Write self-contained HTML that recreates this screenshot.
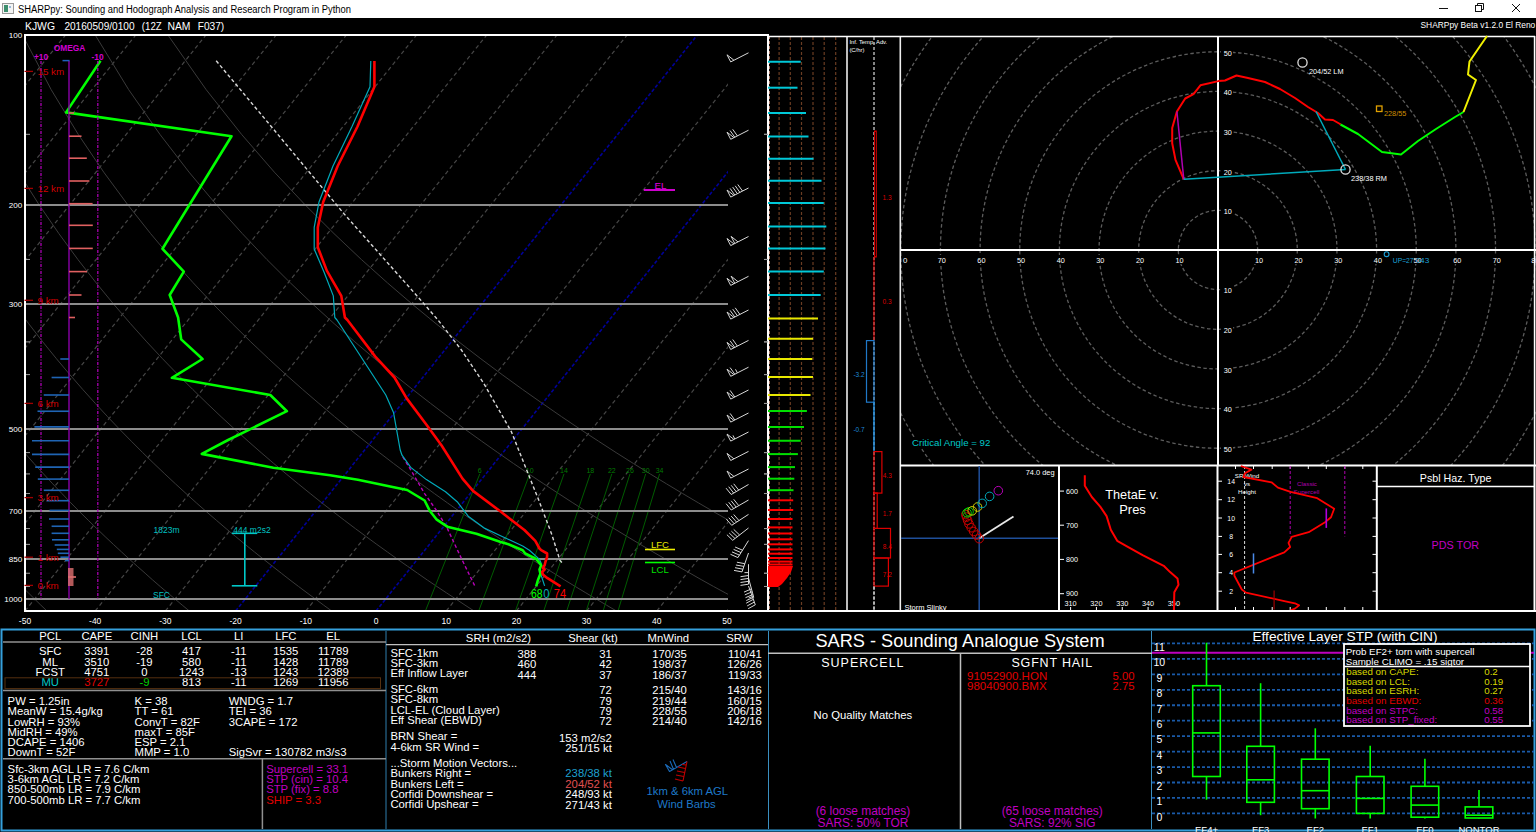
<!DOCTYPE html>
<html><head><meta charset="utf-8"><style>
html,body{margin:0;padding:0;background:#000;overflow:hidden;width:1536px;height:832px}
svg{display:block}
text{font-family:"Liberation Sans", sans-serif;}
</style></head><body>
<svg width="1536" height="832" viewBox="0 0 1536 832">
<rect x="0" y="0" width="1536" height="832" fill="#000"/>
<rect x="0.00" y="0.00" width="1536.00" height="18.00" fill="#ffffff" stroke="none" stroke-width="1" />
<rect x="2.50" y="3.50" width="11.00" height="10.00" fill="#f4f4f4" stroke="#9a9a9a" stroke-width="1" />
<rect x="4.00" y="5.00" width="4.00" height="7.00" fill="#3d8f6e" stroke="none" stroke-width="1" />
<rect x="9.50" y="6.00" width="1.00" height="2.00" fill="#3a7fc0" stroke="none" stroke-width="1" />
<text x="18.0" y="13.0" font-size="10" fill="#000" text-anchor="start" textLength="333.0" lengthAdjust="spacingAndGlyphs" >SHARPpy: Sounding and Hodograph Analysis and Research Program in Python</text>
<line x1="1439.00" y1="8.50" x2="1448.00" y2="8.50" stroke="#111" stroke-width="1" />
<rect x="1475.50" y="5.50" width="6.00" height="6.00" fill="#fff" stroke="#111" stroke-width="1" />
<polyline points="1477.5,5.5 1477.5,3.5 1483.5,3.5 1483.5,9.5 1481.5,9.5" fill="none" stroke="#111" stroke-width="1" stroke-linejoin="round" />
<line x1="1512.00" y1="4.00" x2="1520.00" y2="12.00" stroke="#111" stroke-width="1" />
<line x1="1520.00" y1="4.00" x2="1512.00" y2="12.00" stroke="#111" stroke-width="1" />
<text x="25.0" y="29.5" font-size="10.8" fill="#fff" text-anchor="start" textLength="30.0" lengthAdjust="spacingAndGlyphs" >KJWG</text>
<text x="64.4" y="29.5" font-size="10.8" fill="#fff" text-anchor="start" textLength="70.2" lengthAdjust="spacingAndGlyphs" >20160509/0100</text>
<text x="141.8" y="29.5" font-size="10.8" fill="#fff" text-anchor="start" textLength="20.0" lengthAdjust="spacingAndGlyphs" >(12Z</text>
<text x="167.5" y="29.5" font-size="10.8" fill="#fff" text-anchor="start" textLength="23.0" lengthAdjust="spacingAndGlyphs" >NAM</text>
<text x="197.7" y="29.5" font-size="10.8" fill="#fff" text-anchor="start" textLength="26.5" lengthAdjust="spacingAndGlyphs" >F037)</text>
<text x="1420.5" y="28.0" font-size="9" fill="#fff" text-anchor="start" textLength="114.8" lengthAdjust="spacingAndGlyphs" >SHARPpy Beta v1.2.0 El Reno</text>
<defs><clipPath id="skc"><rect x="25" y="35" width="703" height="576"/></clipPath></defs>
<g clip-path="url(#skc)">
<line x1="-747.20" y1="611.00" x2="-285.49" y2="35.00" stroke="#464646" stroke-width="1.2" stroke-dasharray="4,3"/>
<line x1="-677.00" y1="611.00" x2="-215.29" y2="35.00" stroke="#464646" stroke-width="1.2" stroke-dasharray="4,3"/>
<line x1="-606.80" y1="611.00" x2="-145.09" y2="35.00" stroke="#464646" stroke-width="1.2" stroke-dasharray="4,3"/>
<line x1="-536.60" y1="611.00" x2="-74.89" y2="35.00" stroke="#464646" stroke-width="1.2" stroke-dasharray="4,3"/>
<line x1="-466.40" y1="611.00" x2="-4.69" y2="35.00" stroke="#464646" stroke-width="1.2" stroke-dasharray="4,3"/>
<line x1="-396.20" y1="611.00" x2="65.51" y2="35.00" stroke="#464646" stroke-width="1.2" stroke-dasharray="4,3"/>
<line x1="-326.00" y1="611.00" x2="135.71" y2="35.00" stroke="#464646" stroke-width="1.2" stroke-dasharray="4,3"/>
<line x1="-255.80" y1="611.00" x2="205.91" y2="35.00" stroke="#464646" stroke-width="1.2" stroke-dasharray="4,3"/>
<line x1="-185.60" y1="611.00" x2="276.11" y2="35.00" stroke="#464646" stroke-width="1.2" stroke-dasharray="4,3"/>
<line x1="-115.40" y1="611.00" x2="346.31" y2="35.00" stroke="#464646" stroke-width="1.2" stroke-dasharray="4,3"/>
<line x1="-45.20" y1="611.00" x2="416.51" y2="35.00" stroke="#464646" stroke-width="1.2" stroke-dasharray="4,3"/>
<line x1="25.00" y1="611.00" x2="486.71" y2="35.00" stroke="#464646" stroke-width="1.2" stroke-dasharray="4,3"/>
<line x1="95.20" y1="611.00" x2="556.91" y2="35.00" stroke="#464646" stroke-width="1.2" stroke-dasharray="4,3"/>
<line x1="165.40" y1="611.00" x2="627.11" y2="35.00" stroke="#464646" stroke-width="1.2" stroke-dasharray="4,3"/>
<line x1="235.60" y1="611.00" x2="697.31" y2="35.00" stroke="#000098" stroke-width="1.6" stroke-dasharray="3.5,2"/>
<line x1="305.80" y1="611.00" x2="767.51" y2="35.00" stroke="#464646" stroke-width="1.2" stroke-dasharray="4,3"/>
<line x1="376.00" y1="611.00" x2="837.71" y2="35.00" stroke="#000098" stroke-width="1.6" stroke-dasharray="3.5,2"/>
<line x1="446.20" y1="611.00" x2="907.91" y2="35.00" stroke="#464646" stroke-width="1.2" stroke-dasharray="4,3"/>
<line x1="516.40" y1="611.00" x2="978.11" y2="35.00" stroke="#464646" stroke-width="1.2" stroke-dasharray="4,3"/>
<line x1="586.60" y1="611.00" x2="1048.31" y2="35.00" stroke="#464646" stroke-width="1.2" stroke-dasharray="4,3"/>
<line x1="656.80" y1="611.00" x2="1118.51" y2="35.00" stroke="#464646" stroke-width="1.2" stroke-dasharray="4,3"/>
<line x1="727.00" y1="611.00" x2="1188.71" y2="35.00" stroke="#464646" stroke-width="1.2" stroke-dasharray="4,3"/>
<polyline points="47.0,611.0 40.8,605.1 34.6,599.0 28.3,592.8 21.9,586.5 15.4,580.0 8.8,573.2 2.2,566.3 -4.6,559.2 -11.4,551.9 -18.4,544.4 -25.4,536.6 -32.5,528.6 -39.8,520.3 -47.2,511.7 -54.6,502.8 -62.2,493.5 -70.0,483.9 -77.8,473.9 -85.8,463.5 -94.0,452.6 -102.3,441.2 -110.8,429.3 -119.4,416.7 -128.2,403.4 -137.2,389.4 -146.3,374.6 -155.7,358.8 -165.2,341.9 -175.0,323.7 -185.0,304.1 -195.1,282.8 -205.5,259.5 -216.1,233.6 -226.8,204.8 -237.6,172.1 -248.4,134.3 -258.8,89.7 -268.4,35.0" fill="none" stroke="#3a3a3a" stroke-width="1" stroke-linejoin="round" />
<polyline points="189.4,611.0 182.2,605.1 175.0,599.0 167.6,592.8 160.2,586.5 152.7,580.0 145.1,573.2 137.3,566.3 129.4,559.2 121.5,551.9 113.4,544.4 105.1,536.6 96.8,528.6 88.3,520.3 79.6,511.7 70.8,502.8 61.9,493.5 52.8,483.9 43.5,473.9 34.0,463.5 24.4,452.6 14.5,441.2 4.4,429.3 -5.9,416.7 -16.4,403.4 -27.2,389.4 -38.3,374.6 -49.6,358.8 -61.2,341.9 -73.2,323.7 -85.4,304.1 -98.1,282.8 -111.0,259.5 -124.4,233.6 -138.2,204.8 -152.3,172.1 -166.7,134.3 -181.3,89.7 -195.7,35.0" fill="none" stroke="#3a3a3a" stroke-width="1" stroke-linejoin="round" />
<polyline points="331.7,611.0 323.6,605.1 315.4,599.0 307.0,592.8 298.6,586.5 290.0,580.0 281.3,573.2 272.5,566.3 263.5,559.2 254.4,551.9 245.1,544.4 235.7,536.6 226.1,528.6 216.4,520.3 206.4,511.7 196.3,502.8 186.0,493.5 175.5,483.9 164.8,473.9 153.9,463.5 142.7,452.6 131.3,441.2 119.6,429.3 107.6,416.7 95.3,403.4 82.7,389.4 69.8,374.6 56.5,358.8 42.8,341.9 28.7,323.7 14.1,304.1 -1.0,282.8 -16.6,259.5 -32.7,233.6 -49.5,204.8 -67.0,172.1 -85.1,134.3 -103.8,89.7 -123.0,35.0" fill="none" stroke="#3a3a3a" stroke-width="1" stroke-linejoin="round" />
<polyline points="474.1,611.0 465.0,605.1 455.8,599.0 446.4,592.8 436.9,586.5 427.3,580.0 417.5,573.2 407.6,566.3 397.5,559.2 387.3,551.9 376.8,544.4 366.2,536.6 355.4,528.6 344.4,520.3 333.2,511.7 321.8,502.8 310.2,493.5 298.3,483.9 286.2,473.9 273.8,463.5 261.1,452.6 248.1,441.2 234.8,429.3 221.1,416.7 207.1,403.4 192.7,389.4 177.9,374.6 162.6,358.8 146.8,341.9 130.5,323.7 113.6,304.1 96.1,282.8 77.9,259.5 58.9,233.6 39.1,204.8 18.4,172.1 -3.4,134.3 -26.3,89.7 -50.3,35.0" fill="none" stroke="#3a3a3a" stroke-width="1" stroke-linejoin="round" />
<polyline points="616.5,611.0 606.4,605.1 596.2,599.0 585.8,592.8 575.3,586.5 564.6,580.0 553.8,573.2 542.7,566.3 531.5,559.2 520.1,551.9 508.6,544.4 496.8,536.6 484.7,528.6 472.5,520.3 460.0,511.7 447.3,502.8 434.3,493.5 421.1,483.9 407.5,473.9 393.6,463.5 379.4,452.6 364.9,441.2 349.9,429.3 334.6,416.7 318.9,403.4 302.6,389.4 285.9,374.6 268.7,358.8 250.8,341.9 232.4,323.7 213.2,304.1 193.2,282.8 172.4,259.5 150.6,233.6 127.8,204.8 103.7,172.1 78.2,134.3 51.2,89.7 22.5,35.0" fill="none" stroke="#3a3a3a" stroke-width="1" stroke-linejoin="round" />
<polyline points="758.8,611.0 747.8,605.1 736.6,599.0 725.2,592.8 713.6,586.5 701.9,580.0 690.0,573.2 677.9,566.3 665.6,559.2 653.0,551.9 640.3,544.4 627.3,536.6 614.1,528.6 600.6,520.3 586.8,511.7 572.8,502.8 558.5,493.5 543.8,483.9 528.8,473.9 513.5,463.5 497.8,452.6 481.7,441.2 465.1,429.3 448.1,416.7 430.6,403.4 412.6,389.4 394.0,374.6 374.8,358.8 354.9,341.9 334.2,323.7 312.7,304.1 290.3,282.8 266.9,259.5 242.3,233.6 216.4,204.8 189.0,172.1 159.9,134.3 128.7,89.7 95.2,35.0" fill="none" stroke="#3a3a3a" stroke-width="1" stroke-linejoin="round" />
<polyline points="901.2,611.0 889.2,605.1 877.0,599.0 864.6,592.8 852.0,586.5 839.2,580.0 826.2,573.2 813.0,566.3 799.6,559.2 785.9,551.9 772.0,544.4 757.8,536.6 743.4,528.6 728.7,520.3 713.6,511.7 698.3,502.8 682.6,493.5 666.6,483.9 650.2,473.9 633.4,463.5 616.1,452.6 598.5,441.2 580.3,429.3 561.6,416.7 542.4,403.4 522.5,389.4 502.1,374.6 480.9,358.8 458.9,341.9 436.0,323.7 412.2,304.1 387.4,282.8 361.4,259.5 334.0,233.6 305.1,204.8 274.3,172.1 241.5,134.3 206.2,89.7 167.9,35.0" fill="none" stroke="#3a3a3a" stroke-width="1" stroke-linejoin="round" />
<polyline points="425.4,611.0 479.8,473.9" fill="none" stroke="#005c00" stroke-width="1" stroke-linejoin="round" />
<text x="479.8" y="472.9" font-size="7" fill="#007a00" text-anchor="middle" >6</text>
<polyline points="478.7,611.0 529.7,473.9" fill="none" stroke="#005c00" stroke-width="1" stroke-linejoin="round" />
<text x="529.7" y="472.9" font-size="7" fill="#007a00" text-anchor="middle" >10</text>
<polyline points="515.4,611.0 564.0,473.9" fill="none" stroke="#005c00" stroke-width="1" stroke-linejoin="round" />
<text x="564.0" y="472.9" font-size="7" fill="#007a00" text-anchor="middle" >14</text>
<polyline points="543.7,611.0 590.3,473.9" fill="none" stroke="#005c00" stroke-width="1" stroke-linejoin="round" />
<text x="590.3" y="472.9" font-size="7" fill="#007a00" text-anchor="middle" >18</text>
<polyline points="566.7,611.0 611.8,473.9" fill="none" stroke="#005c00" stroke-width="1" stroke-linejoin="round" />
<text x="611.8" y="472.9" font-size="7" fill="#007a00" text-anchor="middle" >22</text>
<polyline points="586.2,611.0 630.0,473.9" fill="none" stroke="#005c00" stroke-width="1" stroke-linejoin="round" />
<text x="630.0" y="472.9" font-size="7" fill="#007a00" text-anchor="middle" >26</text>
<polyline points="603.1,611.0 645.7,473.9" fill="none" stroke="#005c00" stroke-width="1" stroke-linejoin="round" />
<text x="645.7" y="472.9" font-size="7" fill="#007a00" text-anchor="middle" >30</text>
<polyline points="618.0,611.0 659.6,473.9" fill="none" stroke="#005c00" stroke-width="1" stroke-linejoin="round" />
<text x="659.6" y="472.9" font-size="7" fill="#007a00" text-anchor="middle" >34</text>
</g>
<line x1="25.00" y1="599.00" x2="728.00" y2="599.00" stroke="#8c8c8c" stroke-width="2" />
<text x="22.3" y="602.0" font-size="8.1" fill="#fff" text-anchor="end" >1000</text>
<line x1="25.00" y1="559.00" x2="728.00" y2="559.00" stroke="#8c8c8c" stroke-width="2" />
<text x="22.3" y="562.0" font-size="8.1" fill="#fff" text-anchor="end" >850</text>
<line x1="25.00" y1="511.00" x2="728.00" y2="511.00" stroke="#8c8c8c" stroke-width="2" />
<text x="22.3" y="514.0" font-size="8.1" fill="#fff" text-anchor="end" >700</text>
<line x1="25.00" y1="429.00" x2="728.00" y2="429.00" stroke="#8c8c8c" stroke-width="2" />
<text x="22.3" y="432.0" font-size="8.1" fill="#fff" text-anchor="end" >500</text>
<line x1="25.00" y1="304.00" x2="728.00" y2="304.00" stroke="#8c8c8c" stroke-width="2" />
<text x="22.3" y="307.0" font-size="8.1" fill="#fff" text-anchor="end" >300</text>
<line x1="25.00" y1="205.00" x2="728.00" y2="205.00" stroke="#8c8c8c" stroke-width="2" />
<text x="22.3" y="208.0" font-size="8.1" fill="#fff" text-anchor="end" >200</text>
<text x="22.3" y="38.0" font-size="8.1" fill="#fff" text-anchor="end" >100</text>
<line x1="24.00" y1="134.32" x2="30.00" y2="134.32" stroke="#9a9a9a" stroke-width="1" />
<line x1="764.00" y1="134.32" x2="768.00" y2="134.32" stroke="#9a9a9a" stroke-width="1" />
<line x1="24.00" y1="259.46" x2="30.00" y2="259.46" stroke="#9a9a9a" stroke-width="1" />
<line x1="764.00" y1="259.46" x2="768.00" y2="259.46" stroke="#9a9a9a" stroke-width="1" />
<line x1="24.00" y1="341.88" x2="30.00" y2="341.88" stroke="#9a9a9a" stroke-width="1" />
<line x1="764.00" y1="341.88" x2="768.00" y2="341.88" stroke="#9a9a9a" stroke-width="1" />
<line x1="24.00" y1="374.59" x2="30.00" y2="374.59" stroke="#9a9a9a" stroke-width="1" />
<line x1="764.00" y1="374.59" x2="768.00" y2="374.59" stroke="#9a9a9a" stroke-width="1" />
<line x1="24.00" y1="403.44" x2="30.00" y2="403.44" stroke="#9a9a9a" stroke-width="1" />
<line x1="764.00" y1="403.44" x2="768.00" y2="403.44" stroke="#9a9a9a" stroke-width="1" />
<line x1="24.00" y1="452.60" x2="30.00" y2="452.60" stroke="#9a9a9a" stroke-width="1" />
<line x1="764.00" y1="452.60" x2="768.00" y2="452.60" stroke="#9a9a9a" stroke-width="1" />
<line x1="24.00" y1="473.91" x2="30.00" y2="473.91" stroke="#9a9a9a" stroke-width="1" />
<line x1="764.00" y1="473.91" x2="768.00" y2="473.91" stroke="#9a9a9a" stroke-width="1" />
<line x1="24.00" y1="493.52" x2="30.00" y2="493.52" stroke="#9a9a9a" stroke-width="1" />
<line x1="764.00" y1="493.52" x2="768.00" y2="493.52" stroke="#9a9a9a" stroke-width="1" />
<line x1="24.00" y1="528.58" x2="30.00" y2="528.58" stroke="#9a9a9a" stroke-width="1" />
<line x1="764.00" y1="528.58" x2="768.00" y2="528.58" stroke="#9a9a9a" stroke-width="1" />
<line x1="24.00" y1="544.39" x2="30.00" y2="544.39" stroke="#9a9a9a" stroke-width="1" />
<line x1="764.00" y1="544.39" x2="768.00" y2="544.39" stroke="#9a9a9a" stroke-width="1" />
<line x1="24.00" y1="573.24" x2="30.00" y2="573.24" stroke="#9a9a9a" stroke-width="1" />
<line x1="764.00" y1="573.24" x2="768.00" y2="573.24" stroke="#9a9a9a" stroke-width="1" />
<line x1="24.00" y1="586.48" x2="30.00" y2="586.48" stroke="#9a9a9a" stroke-width="1" />
<line x1="764.00" y1="586.48" x2="768.00" y2="586.48" stroke="#9a9a9a" stroke-width="1" />
<rect x="25.00" y="35.00" width="743.00" height="576.00" fill="none" stroke="#fff" stroke-width="2" />
<text x="25.0" y="624.0" font-size="8.5" fill="#fff" text-anchor="middle" >-50</text>
<text x="95.2" y="624.0" font-size="8.5" fill="#fff" text-anchor="middle" >-40</text>
<text x="165.4" y="624.0" font-size="8.5" fill="#fff" text-anchor="middle" >-30</text>
<text x="235.6" y="624.0" font-size="8.5" fill="#fff" text-anchor="middle" >-20</text>
<text x="305.8" y="624.0" font-size="8.5" fill="#fff" text-anchor="middle" >-10</text>
<text x="376.0" y="624.0" font-size="8.5" fill="#fff" text-anchor="middle" >0</text>
<text x="446.2" y="624.0" font-size="8.5" fill="#fff" text-anchor="middle" >10</text>
<text x="516.4" y="624.0" font-size="8.5" fill="#fff" text-anchor="middle" >20</text>
<text x="586.6" y="624.0" font-size="8.5" fill="#fff" text-anchor="middle" >30</text>
<text x="656.8" y="624.0" font-size="8.5" fill="#fff" text-anchor="middle" >40</text>
<text x="727.0" y="624.0" font-size="8.5" fill="#fff" text-anchor="middle" >50</text>
<g clip-path="url(#skc)">
<polyline points="216.2,60.8 272.1,127.5 344.2,214.0 416.4,295.2 438.0,320.0 461.4,350.0 483.4,382.8 511.3,431.6 539.2,501.3 552.0,535.0 560.0,560.6 563.6,564.0" fill="none" stroke="#d8d8d8" stroke-width="1.4" stroke-linejoin="round" stroke-dasharray="3.5,2.5"/>
<polyline points="402.8,457.0 412.4,472.7 424.6,493.6 436.9,511.0 447.3,528.4 461.2,558.0 475.3,587.0" fill="none" stroke="#b800b8" stroke-width="1.4" stroke-linejoin="round" stroke-dasharray="3.5,2.5"/>
<polyline points="370.8,60.9 370.0,86.8 352.0,126.5 333.0,166.0 319.0,202.0 314.2,227.4 314.2,249.0 324.0,272.0 333.3,295.9 334.8,317.5 337.0,320.0 385.8,395.0 393.5,412.4 400.2,450.0 402.0,455.2 410.7,467.4 426.4,479.6 445.5,491.8 457.7,502.3 468.2,516.2 484.9,528.4 500.0,535.5 522.7,546.0 529.4,550.2 539.5,559.4 541.2,563.6 540.4,568.7 541.2,575.4 544.6,585.9" fill="none" stroke="#00aabb" stroke-width="1.2" stroke-linejoin="round" />
<polyline points="100.5,60.8 66.1,112.4 231.5,136.2 162.5,248.8 183.8,271.6 169.7,295.0 178.1,317.5 181.2,339.4 202.5,359.0 171.9,377.8 270.3,395.0 286.9,411.2 228.1,440.0 201.8,453.9 273.4,467.7 330.0,475.2 357.9,479.7 395.0,487.5 407.2,490.0 424.6,500.5 429.9,511.0 436.8,519.7 447.3,526.7 457.7,529.3 476.4,533.8 500.0,541.8 508.4,544.3 522.7,550.2 525.2,553.5 536.2,559.0 541.2,565.3 539.5,569.5 540.4,573.7 537.8,580.5 536.2,586.3" fill="none" stroke="#00ff00" stroke-width="2.6" stroke-linejoin="round" />
<polyline points="374.4,60.9 374.4,86.8 357.5,126.5 337.7,166.0 323.2,202.0 317.8,227.4 317.8,247.2 326.8,270.6 341.3,295.9 344.9,317.5 347.4,320.0 375.3,356.6 394.5,377.5 406.7,398.4 427.6,426.3 441.6,445.5 462.5,478.6 473.0,490.9 500.9,511.8 524.4,530.0 535.3,540.9 539.5,548.5 541.2,550.2 547.1,553.5 547.1,556.9 545.4,562.0 544.6,565.3 542.9,567.8 544.6,569.5 542.1,572.0 542.9,574.6 547.1,577.9 560.6,586.3" fill="none" stroke="#ff0000" stroke-width="2.6" stroke-linejoin="round" />
</g>
<text x="531.0" y="597.5" font-size="12" fill="#00ff00" text-anchor="start" textLength="11.6" lengthAdjust="spacingAndGlyphs" >68</text>
<text x="543.3" y="597.5" font-size="12" fill="#00aabb" text-anchor="start" textLength="6.3" lengthAdjust="spacingAndGlyphs" >0</text>
<text x="553.8" y="597.5" font-size="12" fill="#ff0000" text-anchor="start" textLength="12.2" lengthAdjust="spacingAndGlyphs" >74</text>
<text x="69.5" y="51.0" font-size="8.4" fill="#d000d0" text-anchor="middle" font-weight="bold">OMEGA</text>
<text x="41.0" y="59.5" font-size="8.4" fill="#d000d0" text-anchor="middle" font-weight="bold">+10</text>
<text x="97.5" y="59.5" font-size="8.4" fill="#d000d0" text-anchor="middle" font-weight="bold">-10</text>
<line x1="41.00" y1="61.00" x2="41.00" y2="599.00" stroke="#a800b0" stroke-width="1.3" stroke-dasharray="3,1.5,1,1.5"/>
<line x1="97.80" y1="61.00" x2="97.80" y2="599.00" stroke="#a800b0" stroke-width="1.3" stroke-dasharray="3,1.5,1,1.5"/>
<line x1="69.00" y1="61.00" x2="69.00" y2="599.00" stroke="#8a00a8" stroke-width="1.4" />
<line x1="62.50" y1="60.60" x2="69.60" y2="60.60" stroke="#1f5fbf" stroke-width="1.5" />
<line x1="69.00" y1="113.00" x2="74.00" y2="113.00" stroke="#e06060" stroke-width="1.6" />
<line x1="69.00" y1="136.20" x2="81.50" y2="136.20" stroke="#e06060" stroke-width="1.6" />
<line x1="69.00" y1="158.20" x2="86.80" y2="158.20" stroke="#e06060" stroke-width="1.6" />
<line x1="69.00" y1="181.00" x2="89.40" y2="181.00" stroke="#e06060" stroke-width="1.6" />
<line x1="69.00" y1="203.70" x2="92.60" y2="203.70" stroke="#e06060" stroke-width="1.6" />
<line x1="69.00" y1="225.30" x2="92.80" y2="225.30" stroke="#e06060" stroke-width="1.6" />
<line x1="69.00" y1="248.40" x2="92.80" y2="248.40" stroke="#e06060" stroke-width="1.6" />
<line x1="69.00" y1="271.60" x2="87.00" y2="271.60" stroke="#e06060" stroke-width="1.6" />
<line x1="69.00" y1="295.00" x2="81.50" y2="295.00" stroke="#e06060" stroke-width="1.6" />
<line x1="69.00" y1="317.50" x2="75.00" y2="317.50" stroke="#e06060" stroke-width="1.6" />
<line x1="60.30" y1="359.00" x2="69.00" y2="359.00" stroke="#1f64b4" stroke-width="1.6" />
<line x1="51.60" y1="377.50" x2="69.00" y2="377.50" stroke="#1f64b4" stroke-width="1.6" />
<line x1="43.75" y1="395.00" x2="69.00" y2="395.00" stroke="#1f64b4" stroke-width="1.6" />
<line x1="37.50" y1="411.25" x2="69.00" y2="411.25" stroke="#1f64b4" stroke-width="1.6" />
<line x1="34.40" y1="426.90" x2="69.00" y2="426.90" stroke="#1f64b4" stroke-width="1.6" />
<line x1="32.00" y1="440.80" x2="69.00" y2="440.80" stroke="#1f64b4" stroke-width="1.6" />
<line x1="32.00" y1="454.40" x2="69.00" y2="454.40" stroke="#1f64b4" stroke-width="1.6" />
<line x1="35.20" y1="467.10" x2="69.00" y2="467.10" stroke="#1f64b4" stroke-width="1.6" />
<line x1="37.80" y1="479.10" x2="69.00" y2="479.10" stroke="#1f64b4" stroke-width="1.6" />
<line x1="43.75" y1="490.30" x2="69.00" y2="490.30" stroke="#1f64b4" stroke-width="1.6" />
<line x1="46.40" y1="500.70" x2="69.00" y2="500.70" stroke="#1f64b4" stroke-width="1.6" />
<line x1="49.50" y1="510.40" x2="69.00" y2="510.40" stroke="#1f64b4" stroke-width="1.6" />
<line x1="49.00" y1="519.00" x2="69.00" y2="519.00" stroke="#1f64b4" stroke-width="1.6" />
<line x1="51.60" y1="526.25" x2="69.00" y2="526.25" stroke="#1f64b4" stroke-width="1.6" />
<line x1="51.60" y1="533.30" x2="69.00" y2="533.30" stroke="#1f64b4" stroke-width="1.6" />
<line x1="52.00" y1="539.80" x2="69.00" y2="539.80" stroke="#1f64b4" stroke-width="1.6" />
<line x1="54.70" y1="545.00" x2="69.00" y2="545.00" stroke="#1f64b4" stroke-width="1.6" />
<line x1="56.80" y1="549.40" x2="69.00" y2="549.40" stroke="#1f64b4" stroke-width="1.6" />
<line x1="57.80" y1="553.30" x2="69.00" y2="553.30" stroke="#1f64b4" stroke-width="1.6" />
<line x1="60.40" y1="557.20" x2="69.00" y2="557.20" stroke="#1f64b4" stroke-width="1.6" />
<line x1="65.00" y1="560.60" x2="69.00" y2="560.60" stroke="#1f64b4" stroke-width="1.6" />
<line x1="68.00" y1="569.00" x2="73.50" y2="569.00" stroke="#e07070" stroke-width="1.6" />
<line x1="68.00" y1="571.00" x2="73.50" y2="571.00" stroke="#e07070" stroke-width="1.6" />
<line x1="68.00" y1="573.00" x2="73.50" y2="573.00" stroke="#e07070" stroke-width="1.6" />
<line x1="68.00" y1="575.00" x2="73.50" y2="575.00" stroke="#e07070" stroke-width="1.6" />
<line x1="68.00" y1="577.00" x2="73.50" y2="577.00" stroke="#e07070" stroke-width="1.6" />
<line x1="68.00" y1="579.00" x2="73.50" y2="579.00" stroke="#e07070" stroke-width="1.6" />
<line x1="68.00" y1="581.00" x2="73.50" y2="581.00" stroke="#e07070" stroke-width="1.6" />
<line x1="68.00" y1="583.00" x2="73.50" y2="583.00" stroke="#e07070" stroke-width="1.6" />
<line x1="68.00" y1="585.00" x2="73.50" y2="585.00" stroke="#e07070" stroke-width="1.6" />
<line x1="68.00" y1="577.00" x2="76.00" y2="577.00" stroke="#e07070" stroke-width="1.6" />
<line x1="24.50" y1="71.40" x2="33.00" y2="71.40" stroke="#a00000" stroke-width="1.3" />
<text x="37.5" y="74.9" font-size="9.8" fill="#d00000" text-anchor="start" >15 km</text>
<line x1="24.50" y1="188.40" x2="33.00" y2="188.40" stroke="#a00000" stroke-width="1.3" />
<text x="37.5" y="191.9" font-size="9.8" fill="#d00000" text-anchor="start" >12 km</text>
<line x1="24.50" y1="300.30" x2="33.00" y2="300.30" stroke="#a00000" stroke-width="1.3" />
<text x="37.5" y="303.8" font-size="9.8" fill="#d00000" text-anchor="start" >9 km</text>
<line x1="24.50" y1="403.40" x2="33.00" y2="403.40" stroke="#a00000" stroke-width="1.3" />
<text x="37.5" y="406.9" font-size="9.8" fill="#d00000" text-anchor="start" >6 km</text>
<line x1="24.50" y1="497.60" x2="33.00" y2="497.60" stroke="#a00000" stroke-width="1.3" />
<text x="37.5" y="501.1" font-size="9.8" fill="#d00000" text-anchor="start" >3 km</text>
<line x1="24.50" y1="557.20" x2="33.00" y2="557.20" stroke="#a00000" stroke-width="1.3" />
<text x="37.5" y="560.7" font-size="9.8" fill="#d00000" text-anchor="start" >1 km</text>
<line x1="24.50" y1="585.40" x2="33.00" y2="585.40" stroke="#a00000" stroke-width="1.3" />
<text x="37.5" y="588.9" font-size="9.8" fill="#d00000" text-anchor="start" >0 km</text>
<line x1="244.80" y1="533.30" x2="244.80" y2="585.80" stroke="#00c8c8" stroke-width="1.6" />
<line x1="231.80" y1="533.30" x2="257.30" y2="533.30" stroke="#00c8c8" stroke-width="1.6" />
<line x1="231.80" y1="585.80" x2="257.30" y2="585.80" stroke="#00c8c8" stroke-width="1.6" />
<text x="166.5" y="532.5" font-size="8.5" fill="#00c0c0" text-anchor="middle" >1823m</text>
<text x="252.0" y="532.5" font-size="8.5" fill="#00c0c0" text-anchor="middle" >444 m2s2</text>
<text x="161.5" y="597.5" font-size="8.5" fill="#00c0c0" text-anchor="middle" >SFC</text>
<line x1="644.00" y1="190.00" x2="675.00" y2="190.00" stroke="#ff00ff" stroke-width="1.6" />
<text x="660.5" y="189.0" font-size="9.7" fill="#e000e0" text-anchor="middle" >EL</text>
<line x1="645.00" y1="549.50" x2="675.00" y2="549.50" stroke="#f0f000" stroke-width="1.6" />
<text x="660.0" y="547.5" font-size="9.5" fill="#e8e800" text-anchor="middle" >LFC</text>
<line x1="645.00" y1="562.50" x2="675.00" y2="562.50" stroke="#00ff00" stroke-width="1.6" />
<text x="660.0" y="572.5" font-size="9.5" fill="#00e000" text-anchor="middle" >LCL</text>
<path d="M748.5,52.8L730.7,61.9M730.7,61.9L727.0,54.8L733.9,60.2" fill="none" stroke="#d8d8d8" stroke-width="1" stroke-linejoin="round"/>
<path d="M748.5,130.2L730.7,139.3M730.7,139.3L727.0,132.2L733.9,137.6M734.8,137.2L730.1,130.6M737.4,135.9L732.7,129.3" fill="none" stroke="#d8d8d8" stroke-width="1" stroke-linejoin="round"/>
<path d="M748.5,188.0L730.7,197.1M730.7,197.1L727.0,190.0L733.9,195.4M734.8,195.0L730.1,188.4M737.4,193.7L732.7,187.1M739.9,192.4L735.2,185.8M742.5,191.0L737.8,184.5" fill="none" stroke="#d8d8d8" stroke-width="1" stroke-linejoin="round"/>
<path d="M748.5,236.5L730.7,245.6M730.7,245.6L727.0,238.5L733.9,243.9M734.8,243.5L731.1,236.4L738.0,241.9" fill="none" stroke="#d8d8d8" stroke-width="1" stroke-linejoin="round"/>
<path d="M748.5,276.3L730.7,285.4M730.7,285.4L727.0,278.3L733.9,283.7M734.8,283.3L731.1,276.2L738.0,281.7" fill="none" stroke="#d8d8d8" stroke-width="1" stroke-linejoin="round"/>
<path d="M748.5,310.0L730.7,319.1M730.7,319.1L727.0,312.0L733.9,317.4M734.8,317.0L730.1,310.4M737.4,315.7L732.7,309.1M739.9,314.4L735.2,307.8" fill="none" stroke="#d8d8d8" stroke-width="1" stroke-linejoin="round"/>
<path d="M748.5,340.4L730.7,349.5M730.7,349.5L727.0,342.4L733.9,347.8M734.8,347.4L730.1,340.8M737.4,346.1L732.7,339.5" fill="none" stroke="#d8d8d8" stroke-width="1" stroke-linejoin="round"/>
<path d="M748.5,367.2L730.7,376.3M730.7,376.3L727.0,369.2L733.9,374.6M734.8,374.2L730.1,367.6M737.4,372.9L735.5,369.3" fill="none" stroke="#d8d8d8" stroke-width="1" stroke-linejoin="round"/>
<path d="M748.5,390.0L730.7,399.1M730.7,399.1L727.0,392.0L733.9,397.4M734.8,397.0L730.1,390.4" fill="none" stroke="#d8d8d8" stroke-width="1" stroke-linejoin="round"/>
<path d="M748.5,413.0L730.7,422.1M730.7,422.1L727.0,415.0L733.9,420.4M734.8,420.0L730.1,413.4" fill="none" stroke="#d8d8d8" stroke-width="1" stroke-linejoin="round"/>
<path d="M748.5,432.0L730.7,441.1M730.7,441.1L727.0,434.0L733.9,439.4M734.8,439.0L733.0,435.4" fill="none" stroke="#d8d8d8" stroke-width="1" stroke-linejoin="round"/>
<path d="M748.5,451.4L730.7,460.5M730.7,460.5L727.0,453.4L733.9,458.8" fill="none" stroke="#d8d8d8" stroke-width="1" stroke-linejoin="round"/>
<path d="M748.5,469.0L730.7,478.1M730.7,478.1L727.0,471.0L733.9,476.4" fill="none" stroke="#d8d8d8" stroke-width="1" stroke-linejoin="round"/>
<path d="M748.5,484.5L731.2,494.5M731.2,494.5L726.1,488.2M733.7,493.1L728.7,486.7M736.2,491.6L731.2,485.3M738.7,490.1L733.7,483.8" fill="none" stroke="#d8d8d8" stroke-width="1" stroke-linejoin="round"/>
<path d="M748.5,500.0L731.2,510.0M731.2,510.0L726.1,503.7M733.7,508.6L728.7,502.2M736.2,507.1L731.2,500.8M738.7,505.6L733.7,499.3" fill="none" stroke="#d8d8d8" stroke-width="1" stroke-linejoin="round"/>
<path d="M748.5,514.4L731.7,525.3M731.7,525.3L726.4,519.2M734.2,523.7L728.8,517.7M736.6,522.1L731.2,516.1M739.0,520.6L733.7,514.5" fill="none" stroke="#d8d8d8" stroke-width="1" stroke-linejoin="round"/>
<path d="M748.5,528.0L732.7,540.3M732.7,540.3L726.9,534.7M735.0,538.5L729.2,533.0M737.3,536.7L731.4,531.2M739.6,535.0L733.7,529.4" fill="none" stroke="#d8d8d8" stroke-width="1" stroke-linejoin="round"/>
<path d="M748.5,540.6L737.9,557.6M737.9,557.6L730.5,554.3M739.4,555.1L732.0,551.9M741.0,552.6L733.6,549.4M742.5,550.2L735.1,547.0" fill="none" stroke="#d8d8d8" stroke-width="1" stroke-linejoin="round"/>
<path d="M748.5,553.0L742.0,571.9M742.0,571.9L734.0,570.4M742.9,569.2L735.0,567.7M743.9,566.4L735.9,565.0M744.8,563.7L736.9,562.2" fill="none" stroke="#d8d8d8" stroke-width="1" stroke-linejoin="round"/>
<path d="M748.5,564.2L748.5,584.2M748.5,584.2L740.5,585.4M748.5,581.3L740.5,582.5M748.5,578.4L740.5,579.6M748.5,575.5L740.5,576.7M748.5,572.6L744.5,572.6" fill="none" stroke="#d8d8d8" stroke-width="1" stroke-linejoin="round"/>
<path d="M748.5,578.0L753.7,597.3M753.7,597.3L746.3,600.5M752.9,594.5L745.5,597.7M752.2,591.7L744.8,594.9M751.4,588.9L744.0,592.1" fill="none" stroke="#d8d8d8" stroke-width="1" stroke-linejoin="round"/>
<path d="M748.5,586.0L755.3,604.8M755.3,604.8L748.2,608.7M754.3,602.1L747.2,605.9M753.4,599.3L746.2,603.2M752.4,596.6L748.6,598.0" fill="none" stroke="#d8d8d8" stroke-width="1" stroke-linejoin="round"/>
<line x1="779.10" y1="37.00" x2="779.10" y2="610.00" stroke="#6a3c22" stroke-width="1.2" stroke-dasharray="3,2"/>
<line x1="790.30" y1="37.00" x2="790.30" y2="610.00" stroke="#6a3c22" stroke-width="1.2" stroke-dasharray="3,2"/>
<line x1="801.50" y1="37.00" x2="801.50" y2="610.00" stroke="#6a3c22" stroke-width="1.2" stroke-dasharray="3,2"/>
<line x1="813.00" y1="37.00" x2="813.00" y2="610.00" stroke="#6a3c22" stroke-width="1.2" stroke-dasharray="3,2"/>
<line x1="824.20" y1="37.00" x2="824.20" y2="610.00" stroke="#6a3c22" stroke-width="1.2" stroke-dasharray="3,2"/>
<line x1="835.70" y1="37.00" x2="835.70" y2="610.00" stroke="#6a3c22" stroke-width="1.2" stroke-dasharray="3,2"/>
<line x1="769.50" y1="36.00" x2="769.50" y2="610.00" stroke="#b08070" stroke-width="1" stroke-dasharray="3,2"/>
<line x1="768.00" y1="61.70" x2="800.70" y2="61.70" stroke="#00c8d8" stroke-width="2" />
<line x1="768.00" y1="87.70" x2="797.50" y2="87.70" stroke="#00c8d8" stroke-width="2" />
<line x1="768.00" y1="113.00" x2="806.00" y2="113.00" stroke="#00c8d8" stroke-width="2" />
<line x1="768.00" y1="136.40" x2="808.50" y2="136.40" stroke="#00c8d8" stroke-width="2" />
<line x1="768.00" y1="158.70" x2="813.50" y2="158.70" stroke="#00c8d8" stroke-width="2" />
<line x1="768.00" y1="180.70" x2="821.50" y2="180.70" stroke="#00c8d8" stroke-width="2" />
<line x1="768.00" y1="203.10" x2="823.80" y2="203.10" stroke="#00c8d8" stroke-width="2" />
<line x1="768.00" y1="226.50" x2="826.30" y2="226.50" stroke="#00c8d8" stroke-width="2" />
<line x1="768.00" y1="248.50" x2="825.50" y2="248.50" stroke="#00c8d8" stroke-width="2" />
<line x1="768.00" y1="271.60" x2="823.80" y2="271.60" stroke="#00c8d8" stroke-width="2" />
<line x1="768.00" y1="295.00" x2="820.70" y2="295.00" stroke="#00c8d8" stroke-width="2" />
<line x1="768.00" y1="318.50" x2="818.00" y2="318.50" stroke="#e8e800" stroke-width="2" />
<line x1="768.00" y1="338.80" x2="813.00" y2="338.80" stroke="#e8e800" stroke-width="2" />
<line x1="768.00" y1="359.00" x2="812.30" y2="359.00" stroke="#e8e800" stroke-width="2" />
<line x1="768.00" y1="377.00" x2="813.00" y2="377.00" stroke="#e8e800" stroke-width="2" />
<line x1="768.00" y1="395.00" x2="810.50" y2="395.00" stroke="#e8e800" stroke-width="2" />
<line x1="768.00" y1="410.90" x2="806.90" y2="410.90" stroke="#00e000" stroke-width="2" />
<line x1="768.00" y1="427.10" x2="804.00" y2="427.10" stroke="#00e000" stroke-width="2" />
<line x1="768.00" y1="440.80" x2="800.70" y2="440.80" stroke="#00e000" stroke-width="2" />
<line x1="768.00" y1="454.10" x2="797.90" y2="454.10" stroke="#00e000" stroke-width="2" />
<line x1="768.00" y1="467.10" x2="795.00" y2="467.10" stroke="#00e000" stroke-width="2" />
<line x1="768.00" y1="478.70" x2="794.30" y2="478.70" stroke="#00e000" stroke-width="2" />
<line x1="768.00" y1="490.20" x2="793.50" y2="490.20" stroke="#00e000" stroke-width="2" />
<line x1="768.00" y1="500.30" x2="793.20" y2="500.30" stroke="#ff0000" stroke-width="2" />
<line x1="768.00" y1="510.00" x2="793.20" y2="510.00" stroke="#ff0000" stroke-width="2" />
<line x1="768.00" y1="519.00" x2="792.50" y2="519.00" stroke="#ff0000" stroke-width="2" />
<line x1="768.00" y1="527.40" x2="792.50" y2="527.40" stroke="#ff0000" stroke-width="2" />
<line x1="768.00" y1="533.50" x2="792.50" y2="533.50" stroke="#ff0000" stroke-width="2" />
<line x1="768.00" y1="539.30" x2="792.50" y2="539.30" stroke="#ff0000" stroke-width="2" />
<line x1="768.00" y1="544.30" x2="792.50" y2="544.30" stroke="#ff0000" stroke-width="2" />
<line x1="768.00" y1="549.40" x2="792.50" y2="549.40" stroke="#ff0000" stroke-width="2" />
<line x1="768.00" y1="553.70" x2="792.50" y2="553.70" stroke="#ff0000" stroke-width="2" />
<line x1="768.00" y1="558.00" x2="792.50" y2="558.00" stroke="#ff0000" stroke-width="2" />
<line x1="768.00" y1="561.60" x2="792.50" y2="561.60" stroke="#ff0000" stroke-width="2" />
<line x1="768.00" y1="564.50" x2="792.50" y2="564.50" stroke="#ff0000" stroke-width="2" />
<path d="M768,566 L793,566 L791,572 L787,578 L782,584 L778,587 L768,587 Z" fill="#ff0000"/>
<line x1="764.00" y1="134.32" x2="768.00" y2="134.32" stroke="#9a9a9a" stroke-width="1" />
<line x1="764.00" y1="259.46" x2="768.00" y2="259.46" stroke="#9a9a9a" stroke-width="1" />
<line x1="764.00" y1="341.88" x2="768.00" y2="341.88" stroke="#9a9a9a" stroke-width="1" />
<line x1="764.00" y1="374.59" x2="768.00" y2="374.59" stroke="#9a9a9a" stroke-width="1" />
<line x1="764.00" y1="403.44" x2="768.00" y2="403.44" stroke="#9a9a9a" stroke-width="1" />
<line x1="764.00" y1="452.60" x2="768.00" y2="452.60" stroke="#9a9a9a" stroke-width="1" />
<line x1="764.00" y1="473.91" x2="768.00" y2="473.91" stroke="#9a9a9a" stroke-width="1" />
<line x1="764.00" y1="493.52" x2="768.00" y2="493.52" stroke="#9a9a9a" stroke-width="1" />
<line x1="764.00" y1="528.58" x2="768.00" y2="528.58" stroke="#9a9a9a" stroke-width="1" />
<line x1="764.00" y1="544.39" x2="768.00" y2="544.39" stroke="#9a9a9a" stroke-width="1" />
<line x1="764.00" y1="573.24" x2="768.00" y2="573.24" stroke="#9a9a9a" stroke-width="1" />
<line x1="764.00" y1="586.48" x2="768.00" y2="586.48" stroke="#9a9a9a" stroke-width="1" />
<line x1="847.00" y1="36.00" x2="847.00" y2="611.00" stroke="#eeeeee" stroke-width="1.6" />
<line x1="768.00" y1="36.50" x2="900.00" y2="36.50" stroke="#ffffff" stroke-width="1.6" />
<line x1="768.00" y1="611.00" x2="900.00" y2="611.00" stroke="#ffffff" stroke-width="2" />
<text x="849.4" y="44.0" font-size="5.8" fill="#ffffff" text-anchor="start" >Inf. Temp. Adv.</text>
<text x="849.4" y="51.8" font-size="5.9" fill="#ffffff" text-anchor="start" >(C/hr)</text>
<line x1="874.00" y1="37.00" x2="874.00" y2="610.00" stroke="#cccccc" stroke-width="1.3" stroke-dasharray="3,2"/>
<rect x="874.50" y="131.00" width="1.80" height="126.00" fill="none" stroke="#dd0000" stroke-width="1" />
<text x="887.0" y="199.5" font-size="6.5" fill="#dd0000" text-anchor="middle" >1.3</text>
<line x1="874.00" y1="257.00" x2="874.00" y2="340.60" stroke="#cc0000" stroke-width="1.2" />
<text x="887.0" y="303.5" font-size="6.5" fill="#dd0000" text-anchor="middle" >0.3</text>
<rect x="866.50" y="340.60" width="7.50" height="61.60" fill="none" stroke="#1f78c8" stroke-width="1.2" />
<text x="859.0" y="377.0" font-size="6.5" fill="#1f8ad8" text-anchor="middle" >-3.2</text>
<line x1="874.00" y1="402.00" x2="874.00" y2="451.60" stroke="#1f8ad8" stroke-width="1.5" />
<text x="859.0" y="431.5" font-size="6.5" fill="#1f8ad8" text-anchor="middle" >-0.7</text>
<rect x="874.00" y="451.60" width="7.90" height="41.50" fill="none" stroke="#dd0000" stroke-width="1.2" />
<text x="887.3" y="478.0" font-size="6.5" fill="#dd0000" text-anchor="middle" >4.3</text>
<rect x="874.00" y="493.00" width="3.20" height="35.40" fill="none" stroke="#dd0000" stroke-width="1.2" />
<text x="887.3" y="516.0" font-size="6.5" fill="#dd0000" text-anchor="middle" >1.7</text>
<rect x="874.00" y="528.40" width="16.50" height="29.60" fill="none" stroke="#dd0000" stroke-width="1.2" />
<text x="887.3" y="548.5" font-size="6.5" fill="#dd0000" text-anchor="middle" >8.4</text>
<rect x="874.00" y="558.00" width="14.40" height="28.10" fill="none" stroke="#dd0000" stroke-width="1.2" />
<text x="887.3" y="577.0" font-size="6.5" fill="#dd0000" text-anchor="middle" >7.2</text>
<line x1="874.00" y1="586.00" x2="874.00" y2="610.00" stroke="#dddddd" stroke-width="1" stroke-dasharray="3,2"/>
<defs><clipPath id="hodc"><rect x="901" y="36" width="635" height="429"/></clipPath></defs>
<g clip-path="url(#hodc)">
<circle cx="1218.0" cy="250.0" r="39.65" fill="none" stroke="#5c5c5c" stroke-width="1.3" stroke-dasharray="3.5,2.5"/>
<circle cx="1218.0" cy="250.0" r="79.30" fill="none" stroke="#5c5c5c" stroke-width="1.3" stroke-dasharray="3.5,2.5"/>
<circle cx="1218.0" cy="250.0" r="118.95" fill="none" stroke="#5c5c5c" stroke-width="1.3" stroke-dasharray="3.5,2.5"/>
<circle cx="1218.0" cy="250.0" r="158.60" fill="none" stroke="#5c5c5c" stroke-width="1.3" stroke-dasharray="3.5,2.5"/>
<circle cx="1218.0" cy="250.0" r="198.25" fill="none" stroke="#5c5c5c" stroke-width="1.3" stroke-dasharray="3.5,2.5"/>
<circle cx="1218.0" cy="250.0" r="237.90" fill="none" stroke="#5c5c5c" stroke-width="1.3" stroke-dasharray="3.5,2.5"/>
<circle cx="1218.0" cy="250.0" r="277.55" fill="none" stroke="#5c5c5c" stroke-width="1.3" stroke-dasharray="3.5,2.5"/>
<circle cx="1218.0" cy="250.0" r="317.20" fill="none" stroke="#5c5c5c" stroke-width="1.3" stroke-dasharray="3.5,2.5"/>
<circle cx="1218.0" cy="250.0" r="356.85" fill="none" stroke="#5c5c5c" stroke-width="1.3" stroke-dasharray="3.5,2.5"/>
<circle cx="1218.0" cy="250.0" r="396.50" fill="none" stroke="#5c5c5c" stroke-width="1.3" stroke-dasharray="3.5,2.5"/>
<circle cx="1218.0" cy="250.0" r="436.15" fill="none" stroke="#5c5c5c" stroke-width="1.3" stroke-dasharray="3.5,2.5"/>
</g>
<line x1="900.50" y1="250.00" x2="1536.00" y2="250.00" stroke="#ffffff" stroke-width="2" />
<line x1="1218.00" y1="36.00" x2="1218.00" y2="465.00" stroke="#ffffff" stroke-width="2" />
<rect x="1253.2" y="255" width="11" height="9" fill="#000"/>
<rect x="1173.8" y="255" width="11" height="9" fill="#000"/>
<text x="1259.0" y="262.8" font-size="7.3" fill="#ffffff" text-anchor="middle" >10</text>
<text x="1179.6" y="262.8" font-size="7.3" fill="#ffffff" text-anchor="middle" >10</text>
<rect x="1292.8" y="255" width="11" height="9" fill="#000"/>
<rect x="1134.2" y="255" width="11" height="9" fill="#000"/>
<text x="1298.6" y="262.8" font-size="7.3" fill="#ffffff" text-anchor="middle" >20</text>
<text x="1140.0" y="262.8" font-size="7.3" fill="#ffffff" text-anchor="middle" >20</text>
<rect x="1332.5" y="255" width="11" height="9" fill="#000"/>
<rect x="1094.5" y="255" width="11" height="9" fill="#000"/>
<text x="1338.2" y="262.8" font-size="7.3" fill="#ffffff" text-anchor="middle" >30</text>
<text x="1100.3" y="262.8" font-size="7.3" fill="#ffffff" text-anchor="middle" >30</text>
<rect x="1372.1" y="255" width="11" height="9" fill="#000"/>
<rect x="1054.9" y="255" width="11" height="9" fill="#000"/>
<text x="1377.9" y="262.8" font-size="7.3" fill="#ffffff" text-anchor="middle" >40</text>
<text x="1060.7" y="262.8" font-size="7.3" fill="#ffffff" text-anchor="middle" >40</text>
<rect x="1411.8" y="255" width="11" height="9" fill="#000"/>
<rect x="1015.2" y="255" width="11" height="9" fill="#000"/>
<text x="1417.5" y="262.8" font-size="7.3" fill="#ffffff" text-anchor="middle" >50</text>
<text x="1021.0" y="262.8" font-size="7.3" fill="#ffffff" text-anchor="middle" >50</text>
<rect x="1451.4" y="255" width="11" height="9" fill="#000"/>
<rect x="975.6" y="255" width="11" height="9" fill="#000"/>
<text x="1457.2" y="262.8" font-size="7.3" fill="#ffffff" text-anchor="middle" >60</text>
<text x="981.4" y="262.8" font-size="7.3" fill="#ffffff" text-anchor="middle" >60</text>
<rect x="1491.0" y="255" width="11" height="9" fill="#000"/>
<rect x="936.0" y="255" width="11" height="9" fill="#000"/>
<text x="1496.8" y="262.8" font-size="7.3" fill="#ffffff" text-anchor="middle" >70</text>
<text x="941.8" y="262.8" font-size="7.3" fill="#ffffff" text-anchor="middle" >70</text>
<rect x="1221" y="206.3" width="12" height="8.5" fill="#000"/>
<rect x="1221" y="285.6" width="12" height="8.5" fill="#000"/>
<text x="1227.8" y="214.2" font-size="7.3" fill="#ffffff" text-anchor="middle" >10</text>
<text x="1227.8" y="293.4" font-size="7.3" fill="#ffffff" text-anchor="middle" >10</text>
<rect x="1221" y="166.7" width="12" height="8.5" fill="#000"/>
<rect x="1221" y="325.3" width="12" height="8.5" fill="#000"/>
<text x="1227.8" y="174.5" font-size="7.3" fill="#ffffff" text-anchor="middle" >20</text>
<text x="1227.8" y="333.1" font-size="7.3" fill="#ffffff" text-anchor="middle" >20</text>
<rect x="1221" y="127.1" width="12" height="8.5" fill="#000"/>
<rect x="1221" y="364.9" width="12" height="8.5" fill="#000"/>
<text x="1227.8" y="134.9" font-size="7.3" fill="#ffffff" text-anchor="middle" >30</text>
<text x="1227.8" y="372.8" font-size="7.3" fill="#ffffff" text-anchor="middle" >30</text>
<rect x="1221" y="87.4" width="12" height="8.5" fill="#000"/>
<rect x="1221" y="404.6" width="12" height="8.5" fill="#000"/>
<text x="1227.8" y="95.2" font-size="7.3" fill="#ffffff" text-anchor="middle" >40</text>
<text x="1227.8" y="412.4" font-size="7.3" fill="#ffffff" text-anchor="middle" >40</text>
<rect x="1221" y="47.8" width="12" height="8.5" fill="#000"/>
<rect x="1221" y="444.2" width="12" height="8.5" fill="#000"/>
<text x="1227.8" y="55.5" font-size="7.3" fill="#ffffff" text-anchor="middle" >50</text>
<text x="1227.8" y="452.1" font-size="7.3" fill="#ffffff" text-anchor="middle" >50</text>
<text x="1535.2" y="262.8" font-size="7.3" fill="#ffffff" text-anchor="middle" >80</text>
<text x="903.0" y="262.8" font-size="7.8" fill="#ffffff" text-anchor="start" >0</text>
<line x1="900.30" y1="36.00" x2="900.30" y2="611.00" stroke="#eeeeee" stroke-width="1.6" />
<line x1="900.00" y1="36.50" x2="1535.00" y2="36.50" stroke="#ffffff" stroke-width="1.6" />
<line x1="1534.60" y1="36.00" x2="1534.60" y2="466.00" stroke="#ffffff" stroke-width="1.6" />
<line x1="900.00" y1="465.50" x2="1536.00" y2="465.50" stroke="#ffffff" stroke-width="2" />
<polyline points="1183.8,179.3 1175.5,159.9 1172.2,143.3 1172.2,128.1 1176.9,111.5 1185.2,98.5 1193.5,94.1 1200.4,85.3 1218.4,81.1 1225.0,80.5 1236.5,75.5 1248.0,78.0 1265.0,82.0 1280.0,89.0 1295.0,98.0 1308.0,107.0 1318.0,113.0 1325.0,119.5 1333.0,120.0 1340.0,124.0 1340.5,124.5" fill="none" stroke="#ff0000" stroke-width="2" stroke-linejoin="round" />
<polyline points="1340.5,124.5 1358.0,134.0 1382.0,152.0 1401.0,154.5 1418.0,141.0 1436.0,129.0 1455.0,117.0 1463.5,112.0" fill="none" stroke="#00ff00" stroke-width="2" stroke-linejoin="round" />
<polyline points="1463.5,112.0 1476.0,80.0 1468.0,74.5 1469.5,61.5 1487.0,36.0" fill="none" stroke="#f0f000" stroke-width="2" stroke-linejoin="round" />
<polyline points="1176.9,111.5 1183.8,179.3" fill="none" stroke="#b000b0" stroke-width="1.5" stroke-linejoin="round" />
<polyline points="1183.8,179.3 1345.5,169.5" fill="none" stroke="#00aabb" stroke-width="1.5" stroke-linejoin="round" />
<polyline points="1316.0,111.5 1345.5,169.5" fill="none" stroke="#00aabb" stroke-width="1.5" stroke-linejoin="round" />
<circle cx="1345.5" cy="169.5" r="4.6" fill="none" stroke="#dddddd" stroke-width="1.3"/>
<circle cx="1302.5" cy="62.5" r="4.6" fill="none" stroke="#dddddd" stroke-width="1.3"/>
<text x="1351.0" y="181.0" font-size="7.35" fill="#ffffff" text-anchor="start" >238/38 RM</text>
<text x="1309.0" y="74.0" font-size="7.3" fill="#ffffff" text-anchor="start" >204/52 LM</text>
<rect x="1376.50" y="106.00" width="5.50" height="5.50" fill="none" stroke="#e0a000" stroke-width="1.3" />
<text x="1384.0" y="115.5" font-size="7.3" fill="#d09000" text-anchor="start" >228/55</text>
<circle cx="1386.6" cy="254.2" r="2.4" fill="none" stroke="#1ca0d8" stroke-width="1.1"/>
<text x="1392.8" y="262.5" font-size="7.8" fill="#1ca0d8" text-anchor="start" textLength="20.8" lengthAdjust="spacingAndGlyphs" >UP=27</text>
<text x="1415.5" y="262.5" font-size="7.8" fill="#1ca0d8" text-anchor="start" textLength="13.8" lengthAdjust="spacingAndGlyphs" >043</text>
<rect x="911" y="437" width="80" height="11" fill="#000"/>
<text x="912.0" y="445.8" font-size="9.7" fill="#00c8c8" text-anchor="start" >Critical Angle = 92</text>
<line x1="979.20" y1="466.00" x2="979.20" y2="610.00" stroke="#1f4f9a" stroke-width="1.5" />
<line x1="901.00" y1="538.30" x2="1059.00" y2="538.30" stroke="#1f4f9a" stroke-width="1.5" />
<line x1="979.20" y1="538.30" x2="1013.50" y2="516.50" stroke="#e8e8e8" stroke-width="1.8" />
<circle cx="979.2" cy="538.7" r="4.3" fill="none" stroke="#cc0000" stroke-width="1"/>
<circle cx="976.5" cy="535.1" r="4.3" fill="none" stroke="#cc0000" stroke-width="1"/>
<circle cx="973.7" cy="531.5" r="4.3" fill="none" stroke="#cc0000" stroke-width="1"/>
<circle cx="971.2" cy="527.7" r="4.3" fill="none" stroke="#cc0000" stroke-width="1"/>
<circle cx="969" cy="523.9" r="4.3" fill="none" stroke="#cc0000" stroke-width="1"/>
<circle cx="967.6" cy="520.3" r="4.3" fill="none" stroke="#cc0000" stroke-width="1"/>
<circle cx="966.5" cy="517.1" r="4.3" fill="none" stroke="#cc0000" stroke-width="1"/>
<circle cx="965.9" cy="514.6" r="4.3" fill="none" stroke="#cc0000" stroke-width="1"/>
<circle cx="967" cy="512.9" r="4.3" fill="none" stroke="#00cc00" stroke-width="1"/>
<circle cx="969" cy="511.8" r="4.3" fill="none" stroke="#00cc00" stroke-width="1"/>
<circle cx="972.2" cy="510.8" r="4.3" fill="none" stroke="#cccc00" stroke-width="1"/>
<circle cx="977.5" cy="507" r="4.3" fill="none" stroke="#cccc00" stroke-width="1"/>
<circle cx="982.2" cy="503.4" r="4.3" fill="none" stroke="#00aabb" stroke-width="1"/>
<circle cx="989.6" cy="496.4" r="4.3" fill="none" stroke="#00aabb" stroke-width="1"/>
<circle cx="998.3" cy="490.7" r="4.3" fill="none" stroke="#bb00bb" stroke-width="1"/>
<text x="1054.5" y="474.5" font-size="7.4" fill="#ffffff" text-anchor="end" >74.0 deg</text>
<text x="904.5" y="610.0" font-size="7.5" fill="#ffffff" text-anchor="start" >Storm Slinky</text>
<line x1="1059.00" y1="466.00" x2="1059.00" y2="611.00" stroke="#ffffff" stroke-width="2" />
<line x1="1059.00" y1="491.10" x2="1064.00" y2="491.10" stroke="#ffffff" stroke-width="1" />
<text x="1066.0" y="493.8" font-size="7.2" fill="#ffffff" text-anchor="start" >600</text>
<line x1="1059.00" y1="525.20" x2="1064.00" y2="525.20" stroke="#ffffff" stroke-width="1" />
<text x="1066.0" y="527.9" font-size="7.2" fill="#ffffff" text-anchor="start" >700</text>
<line x1="1059.00" y1="559.40" x2="1064.00" y2="559.40" stroke="#ffffff" stroke-width="1" />
<text x="1066.0" y="562.1" font-size="7.2" fill="#ffffff" text-anchor="start" >800</text>
<line x1="1059.00" y1="593.70" x2="1064.00" y2="593.70" stroke="#ffffff" stroke-width="1" />
<text x="1066.0" y="596.4" font-size="7.2" fill="#ffffff" text-anchor="start" >900</text>
<line x1="1070.60" y1="607.00" x2="1070.60" y2="611.00" stroke="#ffffff" stroke-width="1" />
<text x="1070.6" y="605.5" font-size="7.3" fill="#ffffff" text-anchor="middle" >310</text>
<line x1="1096.43" y1="607.00" x2="1096.43" y2="611.00" stroke="#ffffff" stroke-width="1" />
<text x="1096.4" y="605.5" font-size="7.3" fill="#ffffff" text-anchor="middle" >320</text>
<line x1="1122.26" y1="607.00" x2="1122.26" y2="611.00" stroke="#ffffff" stroke-width="1" />
<text x="1122.3" y="605.5" font-size="7.3" fill="#ffffff" text-anchor="middle" >330</text>
<line x1="1148.09" y1="607.00" x2="1148.09" y2="611.00" stroke="#ffffff" stroke-width="1" />
<text x="1148.1" y="605.5" font-size="7.3" fill="#ffffff" text-anchor="middle" >340</text>
<line x1="1173.92" y1="607.00" x2="1173.92" y2="611.00" stroke="#ffffff" stroke-width="1" />
<text x="1173.9" y="605.5" font-size="7.3" fill="#ffffff" text-anchor="middle" >350</text>
<text x="1132.0" y="498.5" font-size="12.7" fill="#ffffff" text-anchor="middle" >ThetaE v.</text>
<text x="1132.5" y="514.0" font-size="12.9" fill="#ffffff" text-anchor="middle" >Pres</text>
<polyline points="1084.8,475.2 1084.8,485.8 1091.8,497.0 1100.2,506.6 1106.6,516.1 1110.8,529.8 1117.2,540.8 1127.8,546.8 1142.6,555.2 1163.7,565.8 1170.1,572.1 1177.5,578.5 1178.5,584.8 1174.3,592.2 1173.9,611.3" fill="none" stroke="#ff0000" stroke-width="2" stroke-linejoin="round" />
<line x1="1217.50" y1="466.00" x2="1217.50" y2="611.00" stroke="#ffffff" stroke-width="2" />
<line x1="1218.00" y1="481.20" x2="1222.00" y2="481.20" stroke="#ffffff" stroke-width="1" />
<line x1="1372.50" y1="481.20" x2="1376.50" y2="481.20" stroke="#ffffff" stroke-width="1" />
<line x1="1218.00" y1="499.70" x2="1222.00" y2="499.70" stroke="#ffffff" stroke-width="1" />
<line x1="1372.50" y1="499.70" x2="1376.50" y2="499.70" stroke="#ffffff" stroke-width="1" />
<line x1="1218.00" y1="518.00" x2="1222.00" y2="518.00" stroke="#ffffff" stroke-width="1" />
<line x1="1372.50" y1="518.00" x2="1376.50" y2="518.00" stroke="#ffffff" stroke-width="1" />
<line x1="1218.00" y1="536.40" x2="1222.00" y2="536.40" stroke="#ffffff" stroke-width="1" />
<line x1="1372.50" y1="536.40" x2="1376.50" y2="536.40" stroke="#ffffff" stroke-width="1" />
<line x1="1218.00" y1="554.40" x2="1222.00" y2="554.40" stroke="#ffffff" stroke-width="1" />
<line x1="1372.50" y1="554.40" x2="1376.50" y2="554.40" stroke="#ffffff" stroke-width="1" />
<line x1="1218.00" y1="572.70" x2="1222.00" y2="572.70" stroke="#ffffff" stroke-width="1" />
<line x1="1372.50" y1="572.70" x2="1376.50" y2="572.70" stroke="#ffffff" stroke-width="1" />
<line x1="1218.00" y1="591.20" x2="1222.00" y2="591.20" stroke="#ffffff" stroke-width="1" />
<line x1="1372.50" y1="591.20" x2="1376.50" y2="591.20" stroke="#ffffff" stroke-width="1" />
<text x="1231.2" y="483.7" font-size="6.9" fill="#ffffff" text-anchor="middle" >14</text>
<text x="1231.2" y="502.2" font-size="6.9" fill="#ffffff" text-anchor="middle" >12</text>
<text x="1231.2" y="520.5" font-size="6.9" fill="#ffffff" text-anchor="middle" >10</text>
<text x="1231.2" y="538.9" font-size="6.9" fill="#ffffff" text-anchor="middle" >8</text>
<text x="1231.2" y="556.9" font-size="6.9" fill="#ffffff" text-anchor="middle" >6</text>
<text x="1231.2" y="575.2" font-size="6.9" fill="#ffffff" text-anchor="middle" >4</text>
<text x="1231.2" y="593.7" font-size="6.9" fill="#ffffff" text-anchor="middle" >2</text>
<line x1="1235.50" y1="466.00" x2="1235.50" y2="469.00" stroke="#ffffff" stroke-width="1" />
<line x1="1235.50" y1="607.00" x2="1235.50" y2="611.00" stroke="#ffffff" stroke-width="1" />
<line x1="1253.50" y1="466.00" x2="1253.50" y2="469.00" stroke="#ffffff" stroke-width="1" />
<line x1="1253.50" y1="607.00" x2="1253.50" y2="611.00" stroke="#ffffff" stroke-width="1" />
<line x1="1272.20" y1="466.00" x2="1272.20" y2="469.00" stroke="#ffffff" stroke-width="1" />
<line x1="1272.20" y1="607.00" x2="1272.20" y2="611.00" stroke="#ffffff" stroke-width="1" />
<line x1="1290.20" y1="466.00" x2="1290.20" y2="469.00" stroke="#ffffff" stroke-width="1" />
<line x1="1290.20" y1="607.00" x2="1290.20" y2="611.00" stroke="#ffffff" stroke-width="1" />
<line x1="1308.30" y1="466.00" x2="1308.30" y2="469.00" stroke="#ffffff" stroke-width="1" />
<line x1="1308.30" y1="607.00" x2="1308.30" y2="611.00" stroke="#ffffff" stroke-width="1" />
<line x1="1326.30" y1="466.00" x2="1326.30" y2="469.00" stroke="#ffffff" stroke-width="1" />
<line x1="1326.30" y1="607.00" x2="1326.30" y2="611.00" stroke="#ffffff" stroke-width="1" />
<line x1="1344.80" y1="466.00" x2="1344.80" y2="469.00" stroke="#ffffff" stroke-width="1" />
<line x1="1344.80" y1="607.00" x2="1344.80" y2="611.00" stroke="#ffffff" stroke-width="1" />
<line x1="1362.80" y1="466.00" x2="1362.80" y2="469.00" stroke="#ffffff" stroke-width="1" />
<line x1="1362.80" y1="607.00" x2="1362.80" y2="611.00" stroke="#ffffff" stroke-width="1" />
<line x1="1244.60" y1="466.00" x2="1244.60" y2="610.00" stroke="#dddddd" stroke-width="1" stroke-dasharray="3,2"/>
<line x1="1290.20" y1="466.00" x2="1290.20" y2="536.40" stroke="#b000b0" stroke-width="1" stroke-dasharray="3,2"/>
<line x1="1344.80" y1="466.00" x2="1344.80" y2="536.40" stroke="#b000b0" stroke-width="1" stroke-dasharray="3,2"/>
<text x="1247.0" y="477.5" font-size="6.2" fill="#ffffff" text-anchor="middle" >SR Wind</text>
<text x="1247.0" y="485.5" font-size="6.2" fill="#ffffff" text-anchor="middle" >vs</text>
<text x="1247.0" y="493.5" font-size="6.2" fill="#ffffff" text-anchor="middle" >Height</text>
<text x="1307.0" y="485.5" font-size="6.2" fill="#b000b0" text-anchor="middle" >Classic</text>
<text x="1306.5" y="493.5" font-size="6.2" fill="#b000b0" text-anchor="middle" >Supercell</text>
<polyline points="1240.8,466.0 1251.4,469.6 1245.0,473.2 1243.5,477.0 1271.5,482.3 1277.9,487.6 1290.6,491.8 1317.2,498.2 1334.2,508.8 1331.0,517.3 1324.6,522.6 1308.7,532.2 1291.7,536.8 1288.5,542.8 1290.2,547.0 1284.3,552.3 1234.4,572.5 1234.4,575.7 1241.8,589.5 1246.0,592.6 1284.3,601.1 1294.9,603.3 1299.1,605.4 1294.9,608.6 1290.6,610.3" fill="none" stroke="#ff0000" stroke-width="1.8" stroke-linejoin="round" />
<line x1="1326.30" y1="508.40" x2="1326.30" y2="527.90" stroke="#b000e0" stroke-width="1.6" />
<line x1="1253.50" y1="553.40" x2="1253.50" y2="573.50" stroke="#4a8ae8" stroke-width="1.5" />
<line x1="1274.10" y1="590.50" x2="1274.10" y2="609.60" stroke="#a00000" stroke-width="1.2" />
<line x1="1376.80" y1="466.00" x2="1376.80" y2="611.00" stroke="#ffffff" stroke-width="2" />
<text x="1455.6" y="482.0" font-size="10.7" fill="#ffffff" text-anchor="middle" >Psbl Haz. Type</text>
<line x1="1377.00" y1="486.50" x2="1534.00" y2="486.50" stroke="#ffffff" stroke-width="1.5" />
<text x="1455.3" y="549.0" font-size="10.8" fill="#c000c0" text-anchor="middle" >PDS TOR</text>
<line x1="1534.50" y1="466.00" x2="1534.50" y2="611.00" stroke="#ffffff" stroke-width="2" />
<line x1="900.00" y1="611.00" x2="1536.00" y2="611.00" stroke="#ffffff" stroke-width="2" />
<rect x="1.5" y="629.5" width="1533" height="201" fill="none" stroke="#35a0dc" stroke-width="2"/>
<line x1="386.00" y1="631.00" x2="386.00" y2="829.00" stroke="#2f7fae" stroke-width="1" />
<line x1="768.50" y1="631.00" x2="768.50" y2="829.00" stroke="#3a8fc0" stroke-width="1" />
<line x1="1151.50" y1="631.00" x2="1151.50" y2="829.00" stroke="#3a8fc0" stroke-width="1" />
<text x="50.2" y="639.8" font-size="11.3" fill="#ffffff" text-anchor="middle" >PCL</text>
<text x="96.8" y="639.8" font-size="11.3" fill="#ffffff" text-anchor="middle" >CAPE</text>
<text x="144.4" y="639.8" font-size="11.3" fill="#ffffff" text-anchor="middle" >CINH</text>
<text x="191.5" y="639.8" font-size="11.3" fill="#ffffff" text-anchor="middle" >LCL</text>
<text x="238.7" y="639.8" font-size="11.3" fill="#ffffff" text-anchor="middle" >LI</text>
<text x="285.8" y="639.8" font-size="11.3" fill="#ffffff" text-anchor="middle" >LFC</text>
<text x="333.2" y="639.8" font-size="11.3" fill="#ffffff" text-anchor="middle" >EL</text>
<line x1="3.00" y1="642.00" x2="386.00" y2="642.00" stroke="#909090" stroke-width="1.5" />
<text x="50.2" y="654.8" font-size="11.3" fill="#ffffff" text-anchor="middle" >SFC</text>
<text x="96.8" y="654.8" font-size="11.3" fill="#ffffff" text-anchor="middle" >3391</text>
<text x="144.4" y="654.8" font-size="11.3" fill="#ffffff" text-anchor="middle" >-28</text>
<text x="191.5" y="654.8" font-size="11.3" fill="#ffffff" text-anchor="middle" >417</text>
<text x="238.7" y="654.8" font-size="11.3" fill="#ffffff" text-anchor="middle" >-11</text>
<text x="285.8" y="654.8" font-size="11.3" fill="#ffffff" text-anchor="middle" >1535</text>
<text x="333.2" y="654.8" font-size="11.3" fill="#ffffff" text-anchor="middle" >11789</text>
<text x="50.2" y="665.6" font-size="11.3" fill="#ffffff" text-anchor="middle" >ML</text>
<text x="96.8" y="665.6" font-size="11.3" fill="#ffffff" text-anchor="middle" >3510</text>
<text x="144.4" y="665.6" font-size="11.3" fill="#ffffff" text-anchor="middle" >-19</text>
<text x="191.5" y="665.6" font-size="11.3" fill="#ffffff" text-anchor="middle" >580</text>
<text x="238.7" y="665.6" font-size="11.3" fill="#ffffff" text-anchor="middle" >-11</text>
<text x="285.8" y="665.6" font-size="11.3" fill="#ffffff" text-anchor="middle" >1428</text>
<text x="333.2" y="665.6" font-size="11.3" fill="#ffffff" text-anchor="middle" >11789</text>
<text x="50.2" y="675.7" font-size="11.3" fill="#ffffff" text-anchor="middle" >FCST</text>
<text x="96.8" y="675.7" font-size="11.3" fill="#ffffff" text-anchor="middle" >4751</text>
<text x="144.4" y="675.7" font-size="11.3" fill="#ffffff" text-anchor="middle" >0</text>
<text x="191.5" y="675.7" font-size="11.3" fill="#ffffff" text-anchor="middle" >1243</text>
<text x="238.7" y="675.7" font-size="11.3" fill="#ffffff" text-anchor="middle" >-13</text>
<text x="285.8" y="675.7" font-size="11.3" fill="#ffffff" text-anchor="middle" >1243</text>
<text x="333.2" y="675.7" font-size="11.3" fill="#ffffff" text-anchor="middle" >12389</text>
<text x="50.2" y="686.2" font-size="11.3" fill="#00c8c8" text-anchor="middle" >MU</text>
<text x="96.8" y="686.2" font-size="11.3" fill="#e00000" text-anchor="middle" >3727</text>
<text x="144.4" y="686.2" font-size="11.3" fill="#00d000" text-anchor="middle" >-9</text>
<text x="191.5" y="686.2" font-size="11.3" fill="#ffffff" text-anchor="middle" >813</text>
<text x="238.7" y="686.2" font-size="11.3" fill="#ffffff" text-anchor="middle" >-11</text>
<text x="285.8" y="686.2" font-size="11.3" fill="#ffffff" text-anchor="middle" >1269</text>
<text x="333.2" y="686.2" font-size="11.3" fill="#ffffff" text-anchor="middle" >11956</text>
<rect x="5.00" y="677.80" width="375.50" height="10.80" fill="none" stroke="#553010" stroke-width="1" />
<line x1="3.00" y1="690.40" x2="386.00" y2="690.40" stroke="#909090" stroke-width="1.5" />
<text x="7.6" y="705.0" font-size="11.3" fill="#fff" text-anchor="start" >PW = 1.25in</text>
<text x="134.5" y="705.0" font-size="11.3" fill="#fff" text-anchor="start" >K = 38</text>
<text x="228.7" y="705.0" font-size="11.3" fill="#fff" text-anchor="start" >WNDG = 1.7</text>
<text x="7.6" y="715.2" font-size="11.3" fill="#fff" text-anchor="start" >MeanW = 15.4g/kg</text>
<text x="134.5" y="715.2" font-size="11.3" fill="#fff" text-anchor="start" >TT = 61</text>
<text x="228.7" y="715.2" font-size="11.3" fill="#fff" text-anchor="start" >TEI = 36</text>
<text x="7.6" y="725.5" font-size="11.3" fill="#fff" text-anchor="start" >LowRH = 93%</text>
<text x="134.5" y="725.5" font-size="11.3" fill="#fff" text-anchor="start" >ConvT = 82F</text>
<text x="228.7" y="725.5" font-size="11.3" fill="#fff" text-anchor="start" >3CAPE = 172</text>
<text x="7.6" y="735.8" font-size="11.3" fill="#fff" text-anchor="start" >MidRH = 49%</text>
<text x="134.5" y="735.8" font-size="11.3" fill="#fff" text-anchor="start" >maxT = 85F</text>
<text x="7.6" y="746.0" font-size="11.3" fill="#fff" text-anchor="start" >DCAPE = 1406</text>
<text x="134.5" y="746.0" font-size="11.3" fill="#fff" text-anchor="start" >ESP = 2.1</text>
<text x="7.6" y="756.2" font-size="11.3" fill="#fff" text-anchor="start" >DownT = 52F</text>
<text x="134.5" y="756.2" font-size="11.3" fill="#fff" text-anchor="start" >MMP = 1.0</text>
<text x="228.7" y="756.2" font-size="11.3" fill="#fff" text-anchor="start" >SigSvr = 130782 m3/s3</text>
<line x1="3.00" y1="758.80" x2="386.00" y2="758.80" stroke="#909090" stroke-width="1.5" />
<line x1="262.40" y1="759.00" x2="262.40" y2="829.00" stroke="#909090" stroke-width="1.5" />
<text x="7.6" y="773.0" font-size="11.3" fill="#fff" text-anchor="start" >Sfc-3km AGL LR = 7.6 C/km</text>
<text x="7.6" y="783.2" font-size="11.3" fill="#fff" text-anchor="start" >3-6km AGL LR = 7.2 C/km</text>
<text x="7.6" y="793.4" font-size="11.3" fill="#fff" text-anchor="start" >850-500mb LR = 7.9 C/km</text>
<text x="7.6" y="803.6" font-size="11.3" fill="#fff" text-anchor="start" >700-500mb LR = 7.7 C/km</text>
<text x="266.2" y="773.0" font-size="11.3" fill="#c000c0" text-anchor="start" >Supercell = 33.1</text>
<text x="266.2" y="783.2" font-size="11.3" fill="#c000c0" text-anchor="start" >STP (cin) = 10.4</text>
<text x="266.2" y="793.4" font-size="11.3" fill="#c000c0" text-anchor="start" >STP (fix) = 8.8</text>
<text x="266.2" y="803.6" font-size="11.3" fill="#e00000" text-anchor="start" >SHIP = 3.3</text>
<text x="498.5" y="641.8" font-size="11.3" fill="#ffffff" text-anchor="middle" >SRH (m2/s2)</text>
<text x="593.0" y="641.8" font-size="11.3" fill="#ffffff" text-anchor="middle" >Shear (kt)</text>
<text x="668.3" y="641.8" font-size="11.3" fill="#ffffff" text-anchor="middle" >MnWind</text>
<text x="739.4" y="641.8" font-size="11.3" fill="#ffffff" text-anchor="middle" >SRW</text>
<line x1="386.00" y1="644.70" x2="768.00" y2="644.70" stroke="#c0c0c0" stroke-width="1.2" />
<text x="390.4" y="656.6" font-size="11.3" fill="#fff" text-anchor="start" >SFC-1km</text>
<text x="390.4" y="667.0" font-size="11.3" fill="#fff" text-anchor="start" >SFC-3km</text>
<text x="390.4" y="677.4" font-size="11.3" fill="#fff" text-anchor="start" >Eff Inflow Layer</text>
<text x="390.4" y="693.0" font-size="11.3" fill="#fff" text-anchor="start" >SFC-6km</text>
<text x="390.4" y="703.4" font-size="11.3" fill="#fff" text-anchor="start" >SFC-8km</text>
<text x="390.4" y="713.8" font-size="11.3" fill="#fff" text-anchor="start" >LCL-EL (Cloud Layer)</text>
<text x="390.4" y="724.3" font-size="11.3" fill="#fff" text-anchor="start" >Eff Shear (EBWD)</text>
<text x="390.4" y="739.9" font-size="11.3" fill="#fff" text-anchor="start" >BRN Shear =</text>
<text x="390.4" y="750.8" font-size="11.3" fill="#fff" text-anchor="start" >4-6km SR Wind =</text>
<text x="390.4" y="766.7" font-size="11.3" fill="#fff" text-anchor="start" >...Storm Motion Vectors...</text>
<text x="390.4" y="777.1" font-size="11.3" fill="#fff" text-anchor="start" >Bunkers Right =</text>
<text x="390.4" y="787.5" font-size="11.3" fill="#fff" text-anchor="start" >Bunkers Left =</text>
<text x="390.4" y="798.0" font-size="11.3" fill="#fff" text-anchor="start" >Corfidi Downshear =</text>
<text x="390.4" y="808.4" font-size="11.3" fill="#fff" text-anchor="start" >Corfidi Upshear =</text>
<text x="536.3" y="657.9" font-size="11.3" fill="#fff" text-anchor="end" >388</text>
<text x="611.8" y="657.9" font-size="11.3" fill="#fff" text-anchor="end" >31</text>
<text x="686.8" y="657.9" font-size="11.3" fill="#fff" text-anchor="end" >170/35</text>
<text x="761.8" y="657.9" font-size="11.3" fill="#fff" text-anchor="end" >110/41</text>
<text x="536.3" y="668.3" font-size="11.3" fill="#fff" text-anchor="end" >460</text>
<text x="611.8" y="668.3" font-size="11.3" fill="#fff" text-anchor="end" >42</text>
<text x="686.8" y="668.3" font-size="11.3" fill="#fff" text-anchor="end" >198/37</text>
<text x="761.8" y="668.3" font-size="11.3" fill="#fff" text-anchor="end" >126/26</text>
<text x="536.3" y="678.7" font-size="11.3" fill="#fff" text-anchor="end" >444</text>
<text x="611.8" y="678.7" font-size="11.3" fill="#fff" text-anchor="end" >37</text>
<text x="686.8" y="678.7" font-size="11.3" fill="#fff" text-anchor="end" >186/37</text>
<text x="761.8" y="678.7" font-size="11.3" fill="#fff" text-anchor="end" >119/33</text>
<text x="611.8" y="694.2" font-size="11.3" fill="#fff" text-anchor="end" >72</text>
<text x="686.8" y="694.2" font-size="11.3" fill="#fff" text-anchor="end" >215/40</text>
<text x="761.8" y="694.2" font-size="11.3" fill="#fff" text-anchor="end" >143/16</text>
<text x="611.8" y="704.6" font-size="11.3" fill="#fff" text-anchor="end" >79</text>
<text x="686.8" y="704.6" font-size="11.3" fill="#fff" text-anchor="end" >219/44</text>
<text x="761.8" y="704.6" font-size="11.3" fill="#fff" text-anchor="end" >160/15</text>
<text x="611.8" y="715.0" font-size="11.3" fill="#fff" text-anchor="end" >79</text>
<text x="686.8" y="715.0" font-size="11.3" fill="#fff" text-anchor="end" >228/55</text>
<text x="761.8" y="715.0" font-size="11.3" fill="#fff" text-anchor="end" >206/18</text>
<text x="611.8" y="725.4" font-size="11.3" fill="#fff" text-anchor="end" >72</text>
<text x="686.8" y="725.4" font-size="11.3" fill="#fff" text-anchor="end" >214/40</text>
<text x="761.8" y="725.4" font-size="11.3" fill="#fff" text-anchor="end" >142/16</text>
<text x="611.8" y="741.7" font-size="11.3" fill="#fff" text-anchor="end" >153 m2/s2</text>
<text x="611.8" y="752.1" font-size="11.3" fill="#fff" text-anchor="end" >251/15 kt</text>
<text x="611.8" y="777.1" font-size="11.3" fill="#1ea0d0" text-anchor="end" >238/38 kt</text>
<text x="611.8" y="787.5" font-size="11.3" fill="#e05050" text-anchor="end" >204/52 kt</text>
<text x="611.8" y="798.0" font-size="11.3" fill="#fff" text-anchor="end" >248/93 kt</text>
<text x="611.8" y="809.4" font-size="11.3" fill="#fff" text-anchor="end" >271/43 kt</text>
<text x="687.3" y="794.6" font-size="11.3" fill="#1e78c8" text-anchor="middle" >1km &amp; 6km AGL</text>
<text x="686.5" y="807.6" font-size="11.3" fill="#1e78c8" text-anchor="middle" >Wind Barbs</text>
<path d="M687,761.5 L669.5,771.5 L665.5,764.5 L672.5,769.8 M673.5,769.3 L670,761 M676.5,767.5 L673,759.5" stroke="#1a6ab8" stroke-width="1.1" fill="none" stroke-linejoin="round"/>
<path d="M687,761.5 L683,781 M683,781 L675,779 M683.8,776.5 L676,775 M684.5,772.5 L677,771 M685.3,768.5 L678,767 M686,765 L682,764.5" stroke="#c00000" stroke-width="1.1" fill="none"/>
<text x="960.0" y="647.0" font-size="18.2" fill="#ffffff" text-anchor="middle" >SARS - Sounding Analogue System</text>
<line x1="768.00" y1="653.30" x2="1152.00" y2="653.30" stroke="#c0c0c0" stroke-width="1.5" />
<line x1="960.50" y1="653.30" x2="960.50" y2="829.00" stroke="#c0c0c0" stroke-width="1.5" />
<text x="862.9" y="667.0" font-size="12.5" fill="#ffffff" text-anchor="middle" letter-spacing="1.0">SUPERCELL</text>
<text x="1052.2" y="667.0" font-size="12.5" fill="#ffffff" text-anchor="middle" letter-spacing="0.8">SGFNT HAIL</text>
<text x="967.0" y="679.5" font-size="11.55" fill="#e00000" text-anchor="start" >91052900.HON</text>
<text x="1134.5" y="679.5" font-size="11.3" fill="#e00000" text-anchor="end" >5.00</text>
<text x="967.0" y="689.9" font-size="11.55" fill="#e00000" text-anchor="start" >98040900.BMX</text>
<text x="1134.5" y="689.9" font-size="11.3" fill="#e00000" text-anchor="end" >2.75</text>
<text x="862.9" y="719.0" font-size="11.3" fill="#ffffff" text-anchor="middle" >No Quality Matches</text>
<text x="862.9" y="814.6" font-size="11.9" fill="#c000c0" text-anchor="middle" >(6 loose matches)</text>
<text x="862.9" y="826.6" font-size="11.9" fill="#c000c0" text-anchor="middle" >SARS: 50% TOR</text>
<text x="1052.2" y="814.6" font-size="11.9" fill="#c000c0" text-anchor="middle" >(65 loose matches)</text>
<text x="1052.2" y="826.6" font-size="11.9" fill="#c000c0" text-anchor="middle" >SARS: 92% SIG</text>
<text x="1345.0" y="640.5" font-size="13.7" fill="#ffffff" text-anchor="middle" >Effective Layer STP (with CIN)</text>
<line x1="1152.00" y1="813.40" x2="1534.00" y2="813.40" stroke="#1a5aa8" stroke-width="1.8" stroke-dasharray="3,2"/>
<text x="1159.3" y="820.6" font-size="10.5" fill="#ffffff" text-anchor="middle" >0</text>
<line x1="1152.00" y1="797.95" x2="1534.00" y2="797.95" stroke="#1a5aa8" stroke-width="1.8" stroke-dasharray="3,2"/>
<text x="1159.3" y="805.1" font-size="10.5" fill="#ffffff" text-anchor="middle" >1</text>
<line x1="1152.00" y1="782.50" x2="1534.00" y2="782.50" stroke="#1a5aa8" stroke-width="1.8" stroke-dasharray="3,2"/>
<text x="1159.3" y="789.7" font-size="10.5" fill="#ffffff" text-anchor="middle" >2</text>
<line x1="1152.00" y1="767.05" x2="1534.00" y2="767.05" stroke="#1a5aa8" stroke-width="1.8" stroke-dasharray="3,2"/>
<text x="1159.3" y="774.2" font-size="10.5" fill="#ffffff" text-anchor="middle" >3</text>
<line x1="1152.00" y1="751.60" x2="1534.00" y2="751.60" stroke="#1a5aa8" stroke-width="1.8" stroke-dasharray="3,2"/>
<text x="1159.3" y="758.8" font-size="10.5" fill="#ffffff" text-anchor="middle" >4</text>
<line x1="1152.00" y1="736.15" x2="1534.00" y2="736.15" stroke="#1a5aa8" stroke-width="1.8" stroke-dasharray="3,2"/>
<text x="1159.3" y="743.4" font-size="10.5" fill="#ffffff" text-anchor="middle" >5</text>
<line x1="1152.00" y1="720.70" x2="1534.00" y2="720.70" stroke="#1a5aa8" stroke-width="1.8" stroke-dasharray="3,2"/>
<text x="1159.3" y="727.9" font-size="10.5" fill="#ffffff" text-anchor="middle" >6</text>
<line x1="1152.00" y1="705.25" x2="1534.00" y2="705.25" stroke="#1a5aa8" stroke-width="1.8" stroke-dasharray="3,2"/>
<text x="1159.3" y="712.5" font-size="10.5" fill="#ffffff" text-anchor="middle" >7</text>
<line x1="1152.00" y1="689.80" x2="1534.00" y2="689.80" stroke="#1a5aa8" stroke-width="1.8" stroke-dasharray="3,2"/>
<text x="1159.3" y="697.0" font-size="10.5" fill="#ffffff" text-anchor="middle" >8</text>
<line x1="1152.00" y1="674.35" x2="1534.00" y2="674.35" stroke="#1a5aa8" stroke-width="1.8" stroke-dasharray="3,2"/>
<text x="1159.3" y="681.6" font-size="10.5" fill="#ffffff" text-anchor="middle" >9</text>
<line x1="1152.00" y1="658.90" x2="1534.00" y2="658.90" stroke="#1a5aa8" stroke-width="1.8" stroke-dasharray="3,2"/>
<text x="1159.3" y="666.1" font-size="10.5" fill="#ffffff" text-anchor="middle" >10</text>
<line x1="1152.00" y1="643.45" x2="1534.00" y2="643.45" stroke="#1a5aa8" stroke-width="1.8" stroke-dasharray="3,2"/>
<text x="1159.3" y="650.7" font-size="10.5" fill="#ffffff" text-anchor="middle" >11</text>
<line x1="1152.00" y1="652.72" x2="1534.00" y2="652.72" stroke="#c000c0" stroke-width="2" />
<rect x="1192.70" y="685.70" width="27.60" height="90.80" fill="none" stroke="#00ff00" stroke-width="1.6" />
<line x1="1192.70" y1="732.90" x2="1220.30" y2="732.90" stroke="#00ff00" stroke-width="1.6" />
<line x1="1206.50" y1="642.70" x2="1206.50" y2="685.70" stroke="#00ff00" stroke-width="1.6" />
<line x1="1206.50" y1="776.50" x2="1206.50" y2="799.70" stroke="#00ff00" stroke-width="1.6" />
<rect x="1246.80" y="746.30" width="27.60" height="56.00" fill="none" stroke="#00ff00" stroke-width="1.6" />
<line x1="1246.80" y1="779.80" x2="1274.40" y2="779.80" stroke="#00ff00" stroke-width="1.6" />
<line x1="1260.60" y1="683.20" x2="1260.60" y2="746.30" stroke="#00ff00" stroke-width="1.6" />
<line x1="1260.60" y1="802.30" x2="1260.60" y2="815.20" stroke="#00ff00" stroke-width="1.6" />
<rect x="1301.50" y="759.20" width="27.60" height="49.50" fill="none" stroke="#00ff00" stroke-width="1.6" />
<line x1="1301.50" y1="790.70" x2="1329.10" y2="790.70" stroke="#00ff00" stroke-width="1.6" />
<line x1="1315.30" y1="728.30" x2="1315.30" y2="759.20" stroke="#00ff00" stroke-width="1.6" />
<line x1="1315.30" y1="808.70" x2="1315.30" y2="818.50" stroke="#00ff00" stroke-width="1.6" />
<rect x="1356.40" y="776.50" width="27.60" height="36.90" fill="none" stroke="#00ff00" stroke-width="1.6" />
<line x1="1356.40" y1="798.40" x2="1384.00" y2="798.40" stroke="#00ff00" stroke-width="1.6" />
<line x1="1370.20" y1="745.80" x2="1370.20" y2="776.50" stroke="#00ff00" stroke-width="1.6" />
<line x1="1370.20" y1="813.40" x2="1370.20" y2="818.50" stroke="#00ff00" stroke-width="1.6" />
<rect x="1411.10" y="786.30" width="27.60" height="30.90" fill="none" stroke="#00ff00" stroke-width="1.6" />
<line x1="1411.10" y1="805.10" x2="1438.70" y2="805.10" stroke="#00ff00" stroke-width="1.6" />
<line x1="1424.90" y1="758.70" x2="1424.90" y2="786.30" stroke="#00ff00" stroke-width="1.6" />
<line x1="1424.90" y1="817.20" x2="1424.90" y2="818.50" stroke="#00ff00" stroke-width="1.6" />
<rect x="1465.20" y="806.90" width="27.60" height="11.10" fill="none" stroke="#00ff00" stroke-width="1.6" />
<line x1="1465.20" y1="815.20" x2="1492.80" y2="815.20" stroke="#00ff00" stroke-width="1.6" />
<line x1="1479.00" y1="790.10" x2="1479.00" y2="806.90" stroke="#00ff00" stroke-width="1.6" />
<line x1="1479.00" y1="818.00" x2="1479.00" y2="818.50" stroke="#00ff00" stroke-width="1.6" />
<text x="1206.5" y="833.0" font-size="9.5" fill="#ffffff" text-anchor="middle" >EF4+</text>
<text x="1260.6" y="833.0" font-size="9.5" fill="#ffffff" text-anchor="middle" >EF3</text>
<text x="1315.3" y="833.0" font-size="9.5" fill="#ffffff" text-anchor="middle" >EF2</text>
<text x="1370.2" y="833.0" font-size="9.5" fill="#ffffff" text-anchor="middle" >EF1</text>
<text x="1424.9" y="833.0" font-size="9.5" fill="#ffffff" text-anchor="middle" >EF0</text>
<text x="1479.0" y="833.0" font-size="9.5" fill="#ffffff" text-anchor="middle" >NONTOR</text>
<rect x="1344.00" y="644.00" width="186.00" height="82.00" fill="#000000" stroke="#ffffff" stroke-width="1.8" />
<line x1="1344.00" y1="666.40" x2="1530.00" y2="666.40" stroke="#ffffff" stroke-width="1.5" />
<text x="1345.7" y="654.5" font-size="9.8" fill="#ffffff" text-anchor="start" >Prob EF2+ torn with supercell</text>
<text x="1345.7" y="664.5" font-size="9.8" fill="#ffffff" text-anchor="start" >Sample CLIMO = .15 sigtor</text>
<text x="1346.2" y="675.0" font-size="9.8" fill="#d8d800" text-anchor="start" >based on CAPE:</text>
<text x="1484.2" y="675.0" font-size="9.8" fill="#d8d800" text-anchor="start" >0.2</text>
<text x="1346.2" y="684.6" font-size="9.8" fill="#d8d800" text-anchor="start" >based on LCL:</text>
<text x="1484.2" y="684.6" font-size="9.8" fill="#d8d800" text-anchor="start" >0.19</text>
<text x="1346.2" y="694.3" font-size="9.8" fill="#d8d800" text-anchor="start" >based on ESRH:</text>
<text x="1484.2" y="694.3" font-size="9.8" fill="#d8d800" text-anchor="start" >0.27</text>
<text x="1346.2" y="704.0" font-size="9.8" fill="#e00000" text-anchor="start" >based on EBWD:</text>
<text x="1484.2" y="704.0" font-size="9.8" fill="#e00000" text-anchor="start" >0.36</text>
<text x="1346.2" y="713.6" font-size="9.8" fill="#c000c0" text-anchor="start" >based on STPC:</text>
<text x="1484.2" y="713.6" font-size="9.8" fill="#c000c0" text-anchor="start" >0.58</text>
<text x="1346.2" y="723.2" font-size="9.8" fill="#c000c0" text-anchor="start" >based on STP_fixed:</text>
<text x="1484.2" y="723.2" font-size="9.8" fill="#c000c0" text-anchor="start" >0.55</text>
</svg></body></html>
